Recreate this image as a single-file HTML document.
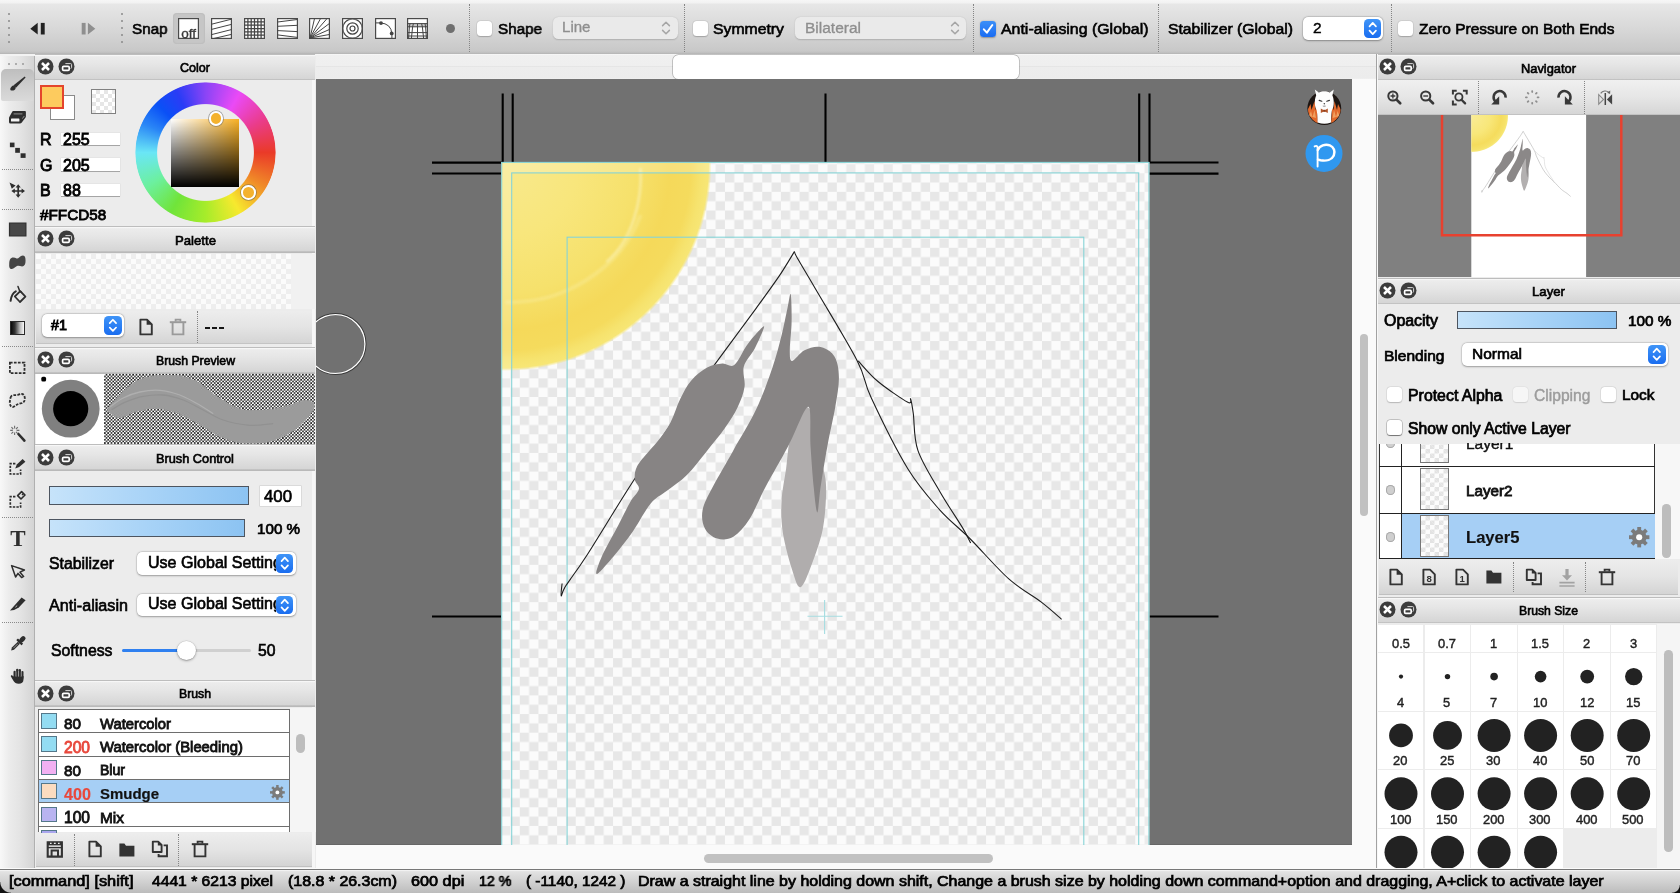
<!DOCTYPE html>
<html><head><meta charset="utf-8"><title>MediBang Paint</title>
<style>
html,body{margin:0;padding:0}
body{width:1680px;height:893px;overflow:hidden;background:#ececec;position:relative;font-family:"Liberation Sans", sans-serif;}
#root{position:absolute;left:0;top:0;width:1680px;height:893px;overflow:hidden}
.t,#root svg{will-change:transform}
#root div,#root span,#root svg{position:absolute;box-sizing:border-box}
.t{white-space:pre;display:block}

.hdr{background:linear-gradient(#ececec,#e2e2e2 45%,#d3d3d3);border-top:1px solid #f8f8f8;border-bottom:1px solid #b9b9b9}
.cb{background:#fff;border-radius:3.5px;box-shadow:0 0 0 0.5px rgba(0,0,0,.07),0 0.5px 1.2px rgba(0,0,0,.2)}
.sel{background:#fff;border-radius:5px;box-shadow:0 0 0 0.5px rgba(0,0,0,.12),0 0.5px 2px rgba(0,0,0,.3)}
.step{background:linear-gradient(#3f94f7,#1a6df0);border-radius:4.5px}
.bar{background:linear-gradient(90deg,#c6e3fa,#a8d3f7 50%,#8cc3f2);border:1px solid #4d5560}
.vsep{width:0;border-left:1.6px dotted #858585}
.hsep{height:0;border-top:1.6px dotted #8a8a8a}
</style></head>
<body><div id="root">
<div style="left:0px;top:0px;width:1680px;height:54px;background:linear-gradient(#f6f6f6 0,#f2f2f2 3px,#e7e7e7 4px,#e2e2e2 12px,#d7d7d7 30px,#c8c8c8 51px,#bebebe 53px,#b2b2b2 54px)"></div>
<div style="left:0px;top:54px;width:1680px;height:2px;background:#f3f3f3"></div>
<div style="left:8.3px;top:12.6px;width:2px;height:2px;background:#8a8a8a;border-radius:50%"></div>
<div style="left:121.3px;top:12.6px;width:2px;height:2px;background:#8a8a8a;border-radius:50%"></div>
<div style="left:8.3px;top:19.6px;width:2px;height:2px;background:#8a8a8a;border-radius:50%"></div>
<div style="left:121.3px;top:19.6px;width:2px;height:2px;background:#8a8a8a;border-radius:50%"></div>
<div style="left:8.3px;top:26.6px;width:2px;height:2px;background:#8a8a8a;border-radius:50%"></div>
<div style="left:121.3px;top:26.6px;width:2px;height:2px;background:#8a8a8a;border-radius:50%"></div>
<div style="left:8.3px;top:33.6px;width:2px;height:2px;background:#8a8a8a;border-radius:50%"></div>
<div style="left:121.3px;top:33.6px;width:2px;height:2px;background:#8a8a8a;border-radius:50%"></div>
<div style="left:8.3px;top:40.6px;width:2px;height:2px;background:#8a8a8a;border-radius:50%"></div>
<div style="left:121.3px;top:40.6px;width:2px;height:2px;background:#8a8a8a;border-radius:50%"></div>
<svg style="left:26px;top:17px;" width="26" height="24" viewBox="0 0 26 24"><path d="M11.7 5.8 L4.3 11.7 L11.7 17.6 Z" fill="#222"/><rect x="14.8" y="5.9" width="3.9" height="11.6" fill="#222"/></svg>
<svg style="left:76px;top:17px;" width="26" height="24" viewBox="0 0 26 24"><path d="M11.9 5.8 L19.3 11.7 L11.9 17.6 Z" fill="#8f8f8f"/><rect x="5.7" y="5.9" width="3.9" height="11.6" fill="#8f8f8f"/></svg>
<span class="t" style="left:132.00px;top:20.00px;font-size:15.3px;line-height:18px;height:18px;color:#000;-webkit-text-stroke:0.63px #000;transform:scaleX(0.9935);transform-origin:0 50%;">Snap</span>
<div style="left:172.5px;top:12.5px;width:32.5px;height:31.5px;background:#c6c6c6;border-radius:4px;box-shadow:inset 0 0 2px rgba(0,0,0,.12)"></div>
<svg style="left:178.2px;top:18px;" width="21" height="21" viewBox="0 0 21 21"><rect x="0.6" y="0.6" width="19.8" height="19.8" fill="#fff" stroke="#4a4a4a" stroke-width="1.2"/><text x="10.7" y="19.6" font-family="Liberation Sans" font-size="13.6" text-anchor="middle" fill="#3a3a3a" stroke="#3a3a3a" stroke-width=".35" textLength="14.8" lengthAdjust="spacingAndGlyphs">off</text></svg>
<svg style="left:211px;top:18px;" width="21" height="21" viewBox="0 0 21 21"><rect x="0.6" y="0.6" width="19.8" height="19.8" fill="#fff" stroke="#4a4a4a" stroke-width="1.2"/><path d="M0.6 6.2 L20.4 1.2 M0.6 11.4 L20.4 6.4 M0.6 16.6 L20.4 11.6 M0.6 21 L20.4 16.4" stroke="#444" stroke-width="1" fill="none"/></svg>
<svg style="left:244px;top:18px;" width="21" height="21" viewBox="0 0 21 21"><rect x="0.6" y="0.6" width="19.8" height="19.8" fill="#fff" stroke="#4a4a4a" stroke-width="1.2"/><path d="M3.9 0.6V20.4M7.2 0.6V20.4M10.5 0.6V20.4M13.8 0.6V20.4M17.1 0.6V20.4M0.6 3.9H20.4M0.6 7.2H20.4M0.6 10.5H20.4M0.6 13.8H20.4M0.6 17.1H20.4" stroke="#444" stroke-width="1.25" fill="none"/></svg>
<svg style="left:276.5px;top:18px;" width="21" height="21" viewBox="0 0 21 21"><rect x="0.6" y="0.6" width="19.8" height="19.8" fill="#fff" stroke="#4a4a4a" stroke-width="1.2"/><path d="M0.6 4 L20.4 1.5 M0.6 8.3 L20.4 7.3 M0.6 12.6 L20.4 13.6 M0.6 16.9 L20.4 19.4" stroke="#444" stroke-width="1" fill="none"/></svg>
<svg style="left:309px;top:18px;" width="21" height="21" viewBox="0 0 21 21"><rect x="0.6" y="0.6" width="19.8" height="19.8" fill="#fff" stroke="#4a4a4a" stroke-width="1.2"/><path d="M1 20 L5.5 0.6 M1 20 L11.5 0.6 M1 20 L18 0.6 M1 20 L20.4 5.5 M1 20 L20.4 11.5 M1 20 L20.4 16.5" stroke="#444" stroke-width="1" fill="none"/></svg>
<svg style="left:342px;top:18px;" width="21" height="21" viewBox="0 0 21 21"><rect x="0.6" y="0.6" width="19.8" height="19.8" fill="#fff" stroke="#4a4a4a" stroke-width="1.2"/><defs><clipPath id="sc6"><rect x="1.2" y="1.2" width="18.6" height="18.6"/></clipPath></defs><g clip-path="url(#sc6)" stroke="#444" stroke-width="1.2" fill="none"><circle cx="10.5" cy="10.5" r="9.7"/><circle cx="10.5" cy="10.5" r="5.7"/><circle cx="10.5" cy="10.5" r="2.5"/></g></svg>
<svg style="left:374.5px;top:18px;" width="21" height="21" viewBox="0 0 21 21"><rect x="0.6" y="0.6" width="19.8" height="19.8" fill="#fff" stroke="#4a4a4a" stroke-width="1.2"/><path d="M0.6 4.9 H5 Q16.3 5.4 16.9 16 V20.4" stroke="#444" stroke-width="1" fill="none" stroke-width="1.2"/><circle cx="6" cy="5.1" r="1.9" fill="#444"/><circle cx="16.7" cy="15.4" r="1.9" fill="#444"/></svg>
<svg style="left:407px;top:18px;" width="21" height="21" viewBox="0 0 21 21"><rect x="0.6" y="0.6" width="19.8" height="19.8" fill="#fff" stroke="#4a4a4a" stroke-width="1.2"/><path d="M0.6 5.6H20.4M0.6 8.8H20.4M0.6 14.6H20.4M0.6 18H20.4 M6.4 5.6 L5.6 9 L4.4 20.4 M10.5 5.6V20.4 M14.6 5.6 L15.4 9 L16.6 20.4 M3 5.6 L2.4 9 L1.6 20.4 M18 5.6 L18.6 9 L19.4 20.4" stroke="#444" stroke-width="1" fill="none"/><rect x="0.6" y="5.6" width="19.8" height="3.2" fill="#444" opacity=".3"/></svg>
<div style="left:445.7px;top:24.1px;width:9.2px;height:9.2px;background:#6f6f6f;border-radius:50%"></div>
<div class="vsep" style="left:469.0px;top:4px;height:48px"></div>
<div class="cb" style="left:477px;top:21px;width:15px;height:15px;"></div>
<span class="t" style="left:497.50px;top:20.00px;font-size:15.3px;line-height:18px;height:18px;color:#000;-webkit-text-stroke:0.63px #000;transform:scaleX(0.9945);transform-origin:0 50%;">Shape</span>
<div style="left:552.5px;top:16.5px;width:125px;height:22.5px;background:#eaeaea;border-radius:5.5px;box-shadow:0 0.5px 1.5px rgba(0,0,0,.16)"></div>
<span class="t" style="left:562.00px;top:18.30px;font-size:15.07px;line-height:18px;height:18px;color:#8e8e8e;-webkit-text-stroke:0.32px #8e8e8e;">Line</span>
<svg style="left:660px;top:18.8px;" width="12" height="18" viewBox="0 0 12 18"><path d="M2.6 6.6 L6 3.2 L9.4 6.6 M2.6 11.4 L6 14.8 L9.4 11.4" fill="none" stroke="#a6a6a6" stroke-width="1.5" stroke-linecap="round" stroke-linejoin="round"/></svg>
<div class="vsep" style="left:684.3px;top:4px;height:48px"></div>
<div class="cb" style="left:693px;top:21px;width:15px;height:15px;"></div>
<span class="t" style="left:713.00px;top:20.00px;font-size:15.3px;line-height:18px;height:18px;color:#000;-webkit-text-stroke:0.63px #000;transform:scaleX(1.0312);transform-origin:0 50%;">Symmetry</span>
<div style="left:794.5px;top:16.5px;width:171.5px;height:22.5px;background:#eaeaea;border-radius:5.5px;box-shadow:0 0.5px 1.5px rgba(0,0,0,.16)"></div>
<span class="t" style="left:804.50px;top:17.80px;font-size:15.5px;line-height:19px;height:19px;color:#8e8e8e;-webkit-text-stroke:0.32px #8e8e8e;">Bilateral</span>
<svg style="left:948.5px;top:18.8px;" width="12" height="18" viewBox="0 0 12 18"><path d="M2.6 6.6 L6 3.2 L9.4 6.6 M2.6 11.4 L6 14.8 L9.4 11.4" fill="none" stroke="#a6a6a6" stroke-width="1.5" stroke-linecap="round" stroke-linejoin="round"/></svg>
<div class="vsep" style="left:972.9px;top:4px;height:48px"></div>
<div style="left:980px;top:20.5px;width:16px;height:16px;border-radius:3.5px;background:linear-gradient(#3b8ff8,#1a6cf2);box-shadow:0 0.5px 1.5px rgba(0,0,0,.3)"></div>
<svg style="left:980px;top:20.5px;" width="16" height="16" viewBox="0 0 16 16"><path d="M3.84 8.32 L6.88 11.68 L12.32 4.0" fill="none" stroke="#fff" stroke-width="2" stroke-linecap="round" stroke-linejoin="round"/></svg>
<span class="t" style="left:1001.40px;top:20.00px;font-size:15.3px;line-height:18px;height:18px;color:#000;-webkit-text-stroke:0.63px #000;transform:scaleX(1.0386);transform-origin:0 50%;">Anti-aliasing (Global)</span>
<div class="vsep" style="left:1158.3px;top:4px;height:48px"></div>
<span class="t" style="left:1168.00px;top:20.00px;font-size:15.3px;line-height:18px;height:18px;color:#000;-webkit-text-stroke:0.63px #000;transform:scaleX(1.0280);transform-origin:0 50%;">Stabilizer (Global)</span>
<div class="sel" style="left:1303px;top:16.5px;width:80px;height:23px"></div>
<span class="t" style="left:1313.00px;top:18.00px;font-size:15.5px;line-height:19px;height:19px;color:#000;-webkit-text-stroke:0.42px #000;">2</span>
<div class="step" style="left:1363.5px;top:18.5px;width:17.5px;height:19px"></div>
<svg style="left:1363.5px;top:18.5px;" width="17.5" height="19" viewBox="0 0 17.5 19"><path d="M5.55 7.3 L8.75 3.9000000000000004 L11.95 7.3 M5.55 11.7 L8.75 15.1 L11.95 11.7" fill="none" stroke="#fff" stroke-width="1.7" stroke-linecap="round" stroke-linejoin="round"/></svg>
<div class="vsep" style="left:1390.6px;top:4px;height:48px"></div>
<div class="cb" style="left:1397.6px;top:21px;width:15px;height:15px;"></div>
<span class="t" style="left:1419.00px;top:20.00px;font-size:15.3px;line-height:18px;height:18px;color:#000;-webkit-text-stroke:0.63px #000;transform:scaleX(1.0127);transform-origin:0 50%;">Zero Pressure on Both Ends</span>
<div style="left:0px;top:56px;width:35px;height:815px;background:linear-gradient(90deg,#f8f8f8,#ececec 25%,#e3e3e3 60%,#d3d3d3)"></div>
<div style="left:34.2px;top:56px;width:1px;height:815px;background:#b0b0b0"></div>
<div style="left:35.2px;top:56px;width:1.2px;height:815px;background:#f6f6f6"></div>
<div style="left:8.3px;top:63.2px;width:2px;height:2px;background:#9a9a9a;border-radius:50%"></div>
<div style="left:15.100000000000001px;top:63.2px;width:2px;height:2px;background:#9a9a9a;border-radius:50%"></div>
<div style="left:21.9px;top:63.2px;width:2px;height:2px;background:#9a9a9a;border-radius:50%"></div>
<div style="left:1.4px;top:68.5px;width:32.6px;height:32.5px;background:linear-gradient(#bebebe,#cdcdcd 50%,#dadada);border-radius:5px 5px 2px 2px"></div>
<svg style="left:0px;top:56px;" width="35" height="650" viewBox="0 56 35 650"><path d="M24.7 76.5 L25.6 77.5 L16 87.7 L13.6 85.3 Z" fill="#2e2e2e"/><path d="M13.6 85.4 C14.9 85.6 15.9 86.8 15.7 87.9 C15.2 90.4 12.6 91.1 10.6 90.2 C9.9 89.1 10.4 88.4 10.9 87.6 C11.5 86.4 12.2 85.3 13.6 85.4Z" fill="#2e2e2e"/><path d="M13.2 111 H25 Q25.9 111 25.9 112 V116.6 Q25.9 117.2 25.4 117.8 L21.6 122.8 Q21 123.6 20 123.6 H10.6 Q9 123.6 9 122 V118.4 Q9 117.4 9.6 116.6 L12.2 111.8 Q12.6 111 13.2 111 Z" fill="#2e2e2e"/><rect x="11" y="118.5" width="8.4" height="3" rx=".6" fill="#f4f4f4"/><path d="M13.6 113.9 H22.4" stroke="#8a8a8a" stroke-width="1.1"/><path d="M22.4 118.6 L24.3 116" stroke="#9a9a9a" stroke-width=".9"/><rect x="9.9" y="142.6" width="4.6" height="4.6" fill="#2e2e2e"/><rect x="15.2" y="147.9" width="4.7" height="4.9" fill="#2e2e2e"/><rect x="20.6" y="153.3" width="5" height="4.6" fill="#2e2e2e"/><path d="M9.5 182.6 L15.6 185.4 L11.8 188.8 Z" fill="#2e2e2e"/><path d="M18.2 186.6 V195.4 M13.8 191 H22.6" stroke="#2e2e2e" stroke-width="1.7" fill="none"/><path d="M18.2 184.2 L20.8 187.6 H15.6Z M18.2 197.8 L20.8 194.4 H15.6Z M11.4 191 L14.8 188.4 V193.6Z M25 191 L21.6 188.4 V193.6Z" fill="#2e2e2e"/><rect x="9.5" y="223.1" width="16.4" height="12.8" fill="#484848" stroke="#303030" stroke-width="1.2"/><path d="M10 259.5 C11.6 256.6 14.6 257.4 16.6 258.4 C18.4 259 19.4 257 21 256 C23.4 254.6 25.2 256 25.4 258.4 C25.8 261.4 25.6 264.6 23.6 266 C21.6 267.2 19.6 265.4 17.6 265.8 C15.6 266.2 14 268.8 11.8 269 C9.6 269 9 266.6 9.2 264.4 C9.3 262.6 9.2 261 10 259.5Z" fill="#454545"/><path d="M20.3 291.2 L25.4 296.6 L20 302 L14.8 296.5 Z" fill="none" stroke="#2e2e2e" stroke-width="1.8" stroke-linejoin="round"/><path d="M18 286.4 L19.6 290.8 L21.4 292.4" fill="none" stroke="#2e2e2e" stroke-width="1.5" stroke-linecap="round"/><path d="M15.8 291.4 C12.6 293 11.2 296.6 10.6 300.8" fill="none" stroke="#2e2e2e" stroke-width="2" stroke-linecap="round"/><rect x="9.9" y="362.7" width="14.6" height="10.4" fill="none" stroke="#2e2e2e" stroke-width="1.8" stroke-dasharray="2.7 1.3"/><path d="M10.6 397.6 C11.6 393.8 15 395.6 17.6 395 C20.6 394 23.4 393 24.4 396 C25.4 399.4 24.6 402.6 21.6 403.2 C18.6 403.6 16.6 404.6 14 406.6 C11.6 408.2 9.6 405.4 9.8 402.4 C9.9 400.6 10.2 399 10.6 397.6Z" fill="none" stroke="#2e2e2e" stroke-width="1.8" stroke-dasharray="2.7 1.3"/><path d="M18.4 434 L24.4 440.6" stroke="#2e2e2e" stroke-width="2.6" stroke-linecap="round"/><path d="M14.6 425.8V428.4 M14.6 432.4V435 M10.2 430.4H12.8 M16.6 430.4H19.4 M11.4 427.2 L13.2 429 M16 431.8 L17.2 433 M17.8 427.2 L16 429 M13.2 431.8 L11.4 433.6" stroke="#6e6e6e" stroke-width="1.1"/><path d="M15.4 463.6 H10.3 V474 H20.6 V469.6" fill="none" stroke="#2e2e2e" stroke-width="1.7" stroke-dasharray="2.4 1.2"/><path d="M22.6 459 L25.4 461.8 L19.2 467 L15.2 468.4 L16.8 464.4 Z" fill="#2e2e2e"/><path d="M15.4 496.6 H10.3 V507 H20.6 V502.6" fill="none" stroke="#2e2e2e" stroke-width="1.7" stroke-dasharray="2.4 1.2"/><path d="M21.6 491.6 L25 495 L21 499 L17.6 495.6 Z" fill="none" stroke="#2e2e2e" stroke-width="1.6" stroke-linejoin="round"/><path d="M22.9 493.2 L23.9 494.2 L22.6 495.6 L21.5 494.6Z" fill="#2e2e2e"/><path d="M11.6 565.6 L24.4 570 L20 572.2 L23.6 576.4 L21.6 577.6 L18 573.4 L15.6 577 Z" fill="none" stroke="#2e2e2e" stroke-width="1.5" stroke-linejoin="round"/><path d="M10 610.5 L21.6 597.5 L25.6 600.3 L18.8 607.6 Q14.8 610.6 10 610.5 Z" fill="#2e2e2e"/><path d="M15.4 607.2 L17.2 605.6" stroke="#d0d0d0" stroke-width=".9"/><g transform="translate(19.6 642) rotate(45)"><rect x="-2.3" y="-7.4" width="4.6" height="6.8" rx="2.2" fill="#2e2e2e"/><rect x="-3.7" y="-1.3" width="7.4" height="2.3" rx=".5" fill="#2e2e2e"/><path d="M-1.5 1 V9.4 L0 12 L1.5 9.4 V1 Z" fill="#2e2e2e"/><path d="M0 2.6 V8.8" stroke="#9a9a9a" stroke-width=".9"/></g><g fill="#2e2e2e"><rect x="13.5" y="670.8" width="2.3" height="8" rx="1.1"/><rect x="16.1" y="668.7" width="2.3" height="10" rx="1.1"/><rect x="18.7" y="669.1" width="2.3" height="10" rx="1.1"/><rect x="21.3" y="671" width="2.2" height="8" rx="1.1"/><path d="M13.5 676 H23.5 V679.6 C23.5 682.6 21.4 683.8 18.8 683.8 C16 683.8 14.6 682.8 13.4 680.8 L10.9 676.6 C10.4 675.6 11.6 674.8 12.4 675.6 L13.5 677 Z"/></g><path d="M16 671.6 V677 M18.55 671 V677 M21.15 671.6 V677" stroke="#c8c8c8" stroke-width=".45"/></svg>
<div style="left:10px;top:321.2px;width:14.8px;height:13.4px;background:linear-gradient(90deg,#0a0a0a,#333 30%,#bbb 70%,#fafafa);border:1.4px solid #2a2a2a"></div>
<span class="t" style="left:8.2px;top:525.8px;width:20px;text-align:center;font-family:'Liberation Serif',serif;font-weight:bold;font-size:23px;line-height:26px;color:#2e2e2e">T</span>
<div class="hsep" style="left:2px;top:168.60000000000002px;width:31px"></div>
<div class="hsep" style="left:2px;top:208.5px;width:31px"></div>
<div class="hsep" style="left:2px;top:346.1px;width:31px"></div>
<div class="hsep" style="left:2px;top:517.3px;width:31px"></div>
<div class="hsep" style="left:2px;top:622.3px;width:31px"></div>
<div style="left:35px;top:56px;width:280px;height:815px;background:#ececec"></div>
<div style="left:312.4px;top:56px;width:2.8px;height:815px;background:#f6f6f6"></div>
<div style="left:35px;top:53.5px;width:280px;height:1px;background:#bdbdbd"></div>
<div style="left:35px;top:54.5px;width:280px;height:25.5px;background:linear-gradient(#fafafa 0,#f4f4f4 1px,#ececec 1.6px,#e6e6e6 9px,#d5d5d5 24.3px,#b9b9b9 24.6px,#b9b9b9 25.5px)"></div>
<svg style="left:36.9px;top:57.8px;" width="17" height="17" viewBox="0 0 17 17"><circle cx="8.5" cy="8.5" r="8" fill="#3c3c3c"/><path d="M5 5 L12 12 M12 5 L5 12" stroke="#fff" stroke-width="2.5" stroke-linecap="butt"/></svg>
<svg style="left:57.9px;top:57.8px;" width="17" height="17" viewBox="0 0 17 17"><circle cx="8.5" cy="8.5" r="8" fill="#3c3c3c"/><path d="M7.4 5.6 H12.6 Q13.6 5.6 13.6 6.6 V9.4 Q13.6 10.4 12.6 10.4" fill="none" stroke="#d9d9d9" stroke-width="1"/><rect x="4.6" y="8.3" width="6.6" height="4" rx="1.1" fill="#3c3c3c" stroke="#fff" stroke-width="1.7"/></svg>
<span class="t" style="left:180.00px;top:60.50px;font-size:12.55px;line-height:15px;height:15px;color:#000;-webkit-text-stroke:0.63px #000;">Color</span>
<div style="left:49.9px;top:95.1px;width:24.9px;height:24.6px;background:#fff;border:1px solid #8a8a8a"></div>
<div style="left:39.5px;top:85px;width:24.5px;height:24px;background:#fdcb5e;border:2px solid #e4452c"></div>
<div style="left:90.8px;top:88.8px;width:25.5px;height:25.6px;border:1px solid #808080;background-color:#fff;background-image:linear-gradient(45deg,#e6e6e6 25%,transparent 25%,transparent 75%,#e6e6e6 75%),linear-gradient(45deg,#e6e6e6 25%,transparent 25%,transparent 75%,#e6e6e6 75%);background-size:8px 8px;background-position:0 0,4px 4px"></div>
<span class="t" style="left:40.20px;top:129.80px;font-size:16px;line-height:19px;height:19px;color:#000;-webkit-text-stroke:0.85px #000;">R</span>
<div style="left:60.5px;top:132.70000000000002px;width:59.3px;height:12.3px;background:#fff;box-shadow:0 0.6px 0.5px rgba(0,0,0,.28),0 0 0 0.5px rgba(0,0,0,.06)"></div>
<span class="t" style="left:62.60px;top:130.30px;font-size:16px;line-height:19px;height:19px;color:#000;-webkit-text-stroke:0.85px #000;">255</span>
<span class="t" style="left:40.20px;top:155.50px;font-size:16px;line-height:19px;height:19px;color:#000;-webkit-text-stroke:0.85px #000;">G</span>
<div style="left:60.5px;top:158.4px;width:59.3px;height:12.3px;background:#fff;box-shadow:0 0.6px 0.5px rgba(0,0,0,.28),0 0 0 0.5px rgba(0,0,0,.06)"></div>
<span class="t" style="left:62.60px;top:156.00px;font-size:16px;line-height:19px;height:19px;color:#000;-webkit-text-stroke:0.85px #000;">205</span>
<span class="t" style="left:40.20px;top:180.80px;font-size:16px;line-height:19px;height:19px;color:#000;-webkit-text-stroke:0.85px #000;">B</span>
<div style="left:60.5px;top:183.70000000000002px;width:59.3px;height:12.3px;background:#fff;box-shadow:0 0.6px 0.5px rgba(0,0,0,.28),0 0 0 0.5px rgba(0,0,0,.06)"></div>
<span class="t" style="left:62.60px;top:181.30px;font-size:16px;line-height:19px;height:19px;color:#000;-webkit-text-stroke:0.85px #000;">88</span>
<span class="t" style="left:39.90px;top:205.70px;font-size:15.27px;line-height:18px;height:18px;color:#000;-webkit-text-stroke:0.85px #000;">#FFCD58</span>
<div style="left:135.39999999999998px;top:82.39999999999999px;width:140.6px;height:140.6px;border-radius:50%;background:conic-gradient(from 90deg,#ea3a28,#f08a28 30deg,#f7e92e 60deg,#a6ec2a 90deg,#70e43a 120deg,#6cf09e 150deg,#6ae6f6 180deg,#2a86f6 205deg,#0a50f6 225deg,#2a3cf6 245deg,#8a44f6 270deg,#ea4af6 300deg,#ea3c8c 330deg,#ea3a28);-webkit-mask:radial-gradient(circle closest-side,transparent 47.9px,#000 48.9px,#000 69.6px,transparent 70.6px);mask:radial-gradient(circle closest-side,transparent 47.9px,#000 48.9px,#000 69.6px,transparent 70.6px)"></div>
<div style="left:171.3px;top:118.8px;width:68.2px;height:68px;background:linear-gradient(to top,#000,rgba(0,0,0,0)),linear-gradient(to right,#fff,#f9b125)"></div>
<div style="left:208.6px;top:111.3px;width:14.6px;height:14.6px;border-radius:50%;background:#f4b22e;border:2px solid #fff;box-shadow:0 0 0 0.8px rgba(90,90,90,.55)"></div>
<div style="left:241.1px;top:185.1px;width:14.6px;height:14.6px;border-radius:50%;background:#f4b22e;border:2px solid #fff;box-shadow:0 0 0 0.8px rgba(90,90,90,.55)"></div>
<div style="left:35px;top:226.0px;width:280px;height:1px;background:#bdbdbd"></div>
<div style="left:35px;top:227.0px;width:280px;height:25.5px;background:linear-gradient(#fafafa 0,#f4f4f4 1px,#ececec 1.6px,#e6e6e6 9px,#d5d5d5 24.3px,#b9b9b9 24.6px,#b9b9b9 25.5px)"></div>
<svg style="left:36.9px;top:230.3px;" width="17" height="17" viewBox="0 0 17 17"><circle cx="8.5" cy="8.5" r="8" fill="#3c3c3c"/><path d="M5 5 L12 12 M12 5 L5 12" stroke="#fff" stroke-width="2.5" stroke-linecap="butt"/></svg>
<svg style="left:57.9px;top:230.3px;" width="17" height="17" viewBox="0 0 17 17"><circle cx="8.5" cy="8.5" r="8" fill="#3c3c3c"/><path d="M7.4 5.6 H12.6 Q13.6 5.6 13.6 6.6 V9.4 Q13.6 10.4 12.6 10.4" fill="none" stroke="#d9d9d9" stroke-width="1"/><rect x="4.6" y="8.3" width="6.6" height="4" rx="1.1" fill="#3c3c3c" stroke="#fff" stroke-width="1.7"/></svg>
<span class="t" style="left:174.50px;top:232.50px;font-size:13.17px;line-height:16px;height:16px;color:#000;-webkit-text-stroke:0.63px #000;">Palette</span>
<div style="left:35.5px;top:253.5px;width:255px;height:55.5px;background-color:#fbfbfb;background-image:linear-gradient(45deg,#eeeeee 25%,transparent 25%,transparent 75%,#eeeeee 75%),linear-gradient(45deg,#eeeeee 25%,transparent 25%,transparent 75%,#eeeeee 75%);background-size:10px 10px;background-position:0 0,5px 5px"></div>
<div style="left:290.5px;top:253.5px;width:25px;height:55.5px;background:#f1f1f1"></div>
<div style="left:36px;top:310.5px;width:276.3px;height:33.5px;background:linear-gradient(#ededed,#e4e4e4 50%,#d5d5d5);border-bottom:1px solid #c4c4c4"></div>
<div class="sel" style="left:42.2px;top:314.3px;width:82.2px;height:22.8px"></div>
<span class="t" style="left:51.00px;top:316.70px;font-size:14.38px;line-height:17px;height:17px;color:#000;-webkit-text-stroke:0.85px #000;">#1</span>
<div class="step" style="left:104.3px;top:316.4px;width:17.8px;height:18.7px"></div>
<svg style="left:104.3px;top:316.4px;" width="17.8" height="18.7" viewBox="0 0 17.8 18.7"><path d="M5.7 7.1499999999999995 L8.9 3.75 L12.100000000000001 7.1499999999999995 M5.7 11.55 L8.9 14.95 L12.100000000000001 11.55" fill="none" stroke="#fff" stroke-width="1.7" stroke-linecap="round" stroke-linejoin="round"/></svg>
<svg style="left:136.6px;top:317.2px;" width="18" height="20" viewBox="0 0 18 20"><path d="M3.4 2.6 H10 L14.8 7.4 V17.4 H3.4 Z" fill="none" stroke="#333" stroke-width="1.9" stroke-linejoin="round"/><path d="M9.6 2.4 L15 7.8 H9.6 Z" fill="#333"/></svg>
<svg style="left:168.4px;top:316.3px;" width="20" height="22" viewBox="0 0 20 22"><path d="M1.8 6.2 H18.2" stroke="#9a9a9a" stroke-width="2" /><path d="M7.6 5.6 V3.6 H12.4 V5.6" fill="none" stroke="#9a9a9a" stroke-width="1.8"/><path d="M4.6 7 V18.4 H15.4 V7" fill="none" stroke="#9a9a9a" stroke-width="1.9"/></svg>
<div class="vsep" style="left:196.9px;top:311px;height:32px"></div>
<div style="left:204.9px;top:326.9px;width:5.6px;height:2.1px;background:#151515"></div>
<div style="left:211.9px;top:326.9px;width:5.6px;height:2.1px;background:#151515"></div>
<div style="left:218.9px;top:326.9px;width:5.6px;height:2.1px;background:#151515"></div>
<div style="left:35px;top:347.0px;width:280px;height:1px;background:#bdbdbd"></div>
<div style="left:35px;top:348.0px;width:280px;height:25.5px;background:linear-gradient(#fafafa 0,#f4f4f4 1px,#ececec 1.6px,#e6e6e6 9px,#d5d5d5 24.3px,#b9b9b9 24.6px,#b9b9b9 25.5px)"></div>
<svg style="left:36.9px;top:351.3px;" width="17" height="17" viewBox="0 0 17 17"><circle cx="8.5" cy="8.5" r="8" fill="#3c3c3c"/><path d="M5 5 L12 12 M12 5 L5 12" stroke="#fff" stroke-width="2.5" stroke-linecap="butt"/></svg>
<svg style="left:57.9px;top:351.3px;" width="17" height="17" viewBox="0 0 17 17"><circle cx="8.5" cy="8.5" r="8" fill="#3c3c3c"/><path d="M7.4 5.6 H12.6 Q13.6 5.6 13.6 6.6 V9.4 Q13.6 10.4 12.6 10.4" fill="none" stroke="#d9d9d9" stroke-width="1"/><rect x="4.6" y="8.3" width="6.6" height="4" rx="1.1" fill="#3c3c3c" stroke="#fff" stroke-width="1.7"/></svg>
<span class="t" style="left:155.51px;top:354.00px;font-size:12.25px;line-height:15px;height:15px;color:#000;-webkit-text-stroke:0.63px #000;">Brush Preview</span>
<div style="left:35.5px;top:374px;width:68.5px;height:69.5px;background:#fff"></div>
<div style="left:104px;top:374px;width:211px;height:69.5px;background-color:#fff;background-image:linear-gradient(45deg,#1c1c1c 25%,transparent 25%,transparent 75%,#1c1c1c 75%),linear-gradient(45deg,#1c1c1c 25%,transparent 25%,transparent 75%,#1c1c1c 75%);background-size:3.34px 3.34px;background-position:0 0,1.67px 1.67px"></div>
<svg style="left:35.5px;top:374px;" width="280.5" height="69.5" viewBox="35.5 374 280.5 69.5"><circle cx="70.2" cy="408.7" r="28.9" fill="#808080"/><circle cx="70.2" cy="408.7" r="17.6" fill="#000"/><rect x="40.8" y="376.8" width="4.8" height="4.8" rx="1.6" fill="#000"/><defs><filter id="bl"><feGaussianBlur stdDeviation="0.7"/></filter><clipPath id="pvc"><rect x="104" y="374" width="212" height="69.5"/></clipPath></defs><g clip-path="url(#pvc)"><path d="M107.3 408.7 C108.3 406.1 112.6 402.0 116.0 398.3 C119.4 394.7 122.9 390.1 127.7 386.7 C132.4 383.2 137.4 379.4 144.3 377.5 C151.3 375.6 161.0 374.5 169.3 375.0 C177.7 375.5 186.0 376.4 194.3 380.3 C202.7 384.2 211.0 393.4 219.3 398.3 C227.7 403.2 234.6 408.1 244.3 409.7 C254.1 411.3 267.9 409.5 277.7 408.0 C287.4 406.5 296.8 401.7 302.7 400.8 C308.6 400.0 311.5 401.2 313.0 403.0 C314.5 404.8 314.9 407.2 311.8 411.7 C308.7 416.2 301.4 425.0 294.3 430.0 C287.2 435.0 277.7 439.4 269.3 441.7 C261.0 443.9 252.7 444.5 244.3 443.7 C236.0 442.8 226.3 439.5 219.3 436.7 C212.4 433.8 209.6 430.5 202.7 426.7 C195.7 422.8 185.4 416.7 177.7 413.7 C169.9 410.7 162.9 409.0 156.0 408.7 C149.1 408.3 142.1 410.1 136.0 411.7 C129.9 413.2 123.6 417.7 119.3 418.0 C115.0 418.3 112.2 415.2 110.2 413.7 C108.2 412.1 106.4 411.2 107.3 408.7 Z" fill="#9b9b9b" filter="url(#bl)"/><path d="M109.3 407.0 C111.6 405.5 117.7 400.5 122.7 398.0 C127.7 395.5 133.2 393.3 139.3 392.0 C145.4 390.7 152.7 389.8 159.3 390.3 C166.0 390.8 173.2 392.8 179.3 395.0 C185.4 397.2 190.4 400.2 196.0 403.3 C201.6 406.4 209.9 411.9 212.7 413.7" fill="none" stroke="#b4b4b4" stroke-width="1.3" opacity=".8" filter="url(#bl)"/><path d="M111.0 409.7 C113.5 408.3 120.7 403.9 126.0 401.7 C131.3 399.4 136.6 397.4 142.7 396.3 C148.8 395.2 156.0 394.4 162.7 395.0 C169.3 395.6 176.0 397.5 182.7 400.0 C189.3 402.5 196.0 406.7 202.7 410.0 C209.3 413.3 214.9 417.4 222.7 420.0 C230.4 422.6 241.0 424.7 249.3 425.3 C257.7 425.9 268.8 423.9 272.7 423.7" fill="none" stroke="#8d8d8d" stroke-width="1.3" opacity=".7" filter="url(#bl)"/></g></svg>
<div style="left:35.5px;top:443.5px;width:279.5px;height:1px;background:#c4c4c4"></div>
<div style="left:35px;top:444.2px;width:280px;height:1px;background:#bdbdbd"></div>
<div style="left:35px;top:445.2px;width:280px;height:25.5px;background:linear-gradient(#fafafa 0,#f4f4f4 1px,#ececec 1.6px,#e6e6e6 9px,#d5d5d5 24.3px,#b9b9b9 24.6px,#b9b9b9 25.5px)"></div>
<svg style="left:36.9px;top:448.5px;" width="17" height="17" viewBox="0 0 17 17"><circle cx="8.5" cy="8.5" r="8" fill="#3c3c3c"/><path d="M5 5 L12 12 M12 5 L5 12" stroke="#fff" stroke-width="2.5" stroke-linecap="butt"/></svg>
<svg style="left:57.9px;top:448.5px;" width="17" height="17" viewBox="0 0 17 17"><circle cx="8.5" cy="8.5" r="8" fill="#3c3c3c"/><path d="M7.4 5.6 H12.6 Q13.6 5.6 13.6 6.6 V9.4 Q13.6 10.4 12.6 10.4" fill="none" stroke="#d9d9d9" stroke-width="1"/><rect x="4.6" y="8.3" width="6.6" height="4" rx="1.1" fill="#3c3c3c" stroke="#fff" stroke-width="1.7"/></svg>
<span class="t" style="left:155.99px;top:451.20px;font-size:12.76px;line-height:15px;height:15px;color:#000;-webkit-text-stroke:0.63px #000;">Brush Control</span>
<div class="bar" style="left:48.5px;top:486px;width:200px;height:19px"></div>
<div style="left:260px;top:486px;width:41px;height:20px;background:#fff;box-shadow:0 0 0 0.5px rgba(0,0,0,.15)"></div>
<span class="t" style="left:263.50px;top:486.50px;font-size:16.78px;line-height:20px;height:20px;color:#000;-webkit-text-stroke:0.63px #000;">400</span>
<div class="bar" style="left:48.5px;top:518.8px;width:196.5px;height:18.5px"></div>
<span class="t" style="left:257.00px;top:519.50px;font-size:15.2px;line-height:18px;height:18px;color:#000;-webkit-text-stroke:0.73px #000;transform:scaleX(0.9977);transform-origin:0 50%;">100 %</span>
<span class="t" style="left:48.80px;top:553.50px;font-size:15.8px;line-height:19px;height:19px;color:#000;-webkit-text-stroke:0.63px #000;">Stabilizer</span>
<div class="sel" style="left:137px;top:552px;width:158.5px;height:22.5px"></div>
<span class="t" style="left:147.50px;top:552.80px;font-size:16.06px;line-height:19px;height:19px;color:#000;-webkit-text-stroke:0.63px #000;">Use Global Settin</span>
<span class="t" style="left:272.90px;top:552.80px;font-size:15.9px;line-height:19px;height:19px;color:#000;-webkit-text-stroke:0.63px #000;width:3.2px;overflow:hidden;">g</span>
<div class="step" style="left:275.5px;top:554px;width:17.5px;height:18.5px"></div>
<svg style="left:275.5px;top:554px;" width="17.5" height="18.5" viewBox="0 0 17.5 18.5"><path d="M5.55 7.05 L8.75 3.6500000000000004 L11.95 7.05 M5.55 11.45 L8.75 14.85 L11.95 11.45" fill="none" stroke="#fff" stroke-width="1.7" stroke-linecap="round" stroke-linejoin="round"/></svg>
<span class="t" style="left:48.80px;top:595.50px;font-size:16.15px;line-height:19px;height:19px;color:#000;-webkit-text-stroke:0.63px #000;">Anti-aliasin</span>
<div class="sel" style="left:137px;top:593.5px;width:158.5px;height:22.5px"></div>
<span class="t" style="left:147.50px;top:594.30px;font-size:16.06px;line-height:19px;height:19px;color:#000;-webkit-text-stroke:0.63px #000;">Use Global Settin</span>
<span class="t" style="left:272.90px;top:594.30px;font-size:15.9px;line-height:19px;height:19px;color:#000;-webkit-text-stroke:0.63px #000;width:3.2px;overflow:hidden;">g</span>
<div class="step" style="left:275.5px;top:595.5px;width:17.5px;height:18.5px"></div>
<svg style="left:275.5px;top:595.5px;" width="17.5" height="18.5" viewBox="0 0 17.5 18.5"><path d="M5.55 7.05 L8.75 3.6500000000000004 L11.95 7.05 M5.55 11.45 L8.75 14.85 L11.95 11.45" fill="none" stroke="#fff" stroke-width="1.7" stroke-linecap="round" stroke-linejoin="round"/></svg>
<span class="t" style="left:51.30px;top:640.80px;font-size:15.8px;line-height:19px;height:19px;color:#000;-webkit-text-stroke:0.63px #000;">Softness</span>
<div style="left:122px;top:648.8px;width:129px;height:3.2px;background:#d0d0d0;border-radius:2px"></div>
<div style="left:122px;top:648.8px;width:66px;height:3.2px;background:#2f80f0;border-radius:2px"></div>
<div style="left:177.2px;top:640.8px;width:19px;height:19px;background:#fff;border-radius:50%;box-shadow:0 0 0 0.5px rgba(0,0,0,.12),0 1px 2.5px rgba(0,0,0,.35)"></div>
<span class="t" style="left:258.30px;top:640.80px;font-size:15.73px;line-height:19px;height:19px;color:#000;-webkit-text-stroke:0.63px #000;">50</span>
<div style="left:35px;top:680.2px;width:280px;height:1px;background:#bdbdbd"></div>
<div style="left:35px;top:681.2px;width:280px;height:25.5px;background:linear-gradient(#fafafa 0,#f4f4f4 1px,#ececec 1.6px,#e6e6e6 9px,#d5d5d5 24.3px,#b9b9b9 24.6px,#b9b9b9 25.5px)"></div>
<svg style="left:36.9px;top:684.5px;" width="17" height="17" viewBox="0 0 17 17"><circle cx="8.5" cy="8.5" r="8" fill="#3c3c3c"/><path d="M5 5 L12 12 M12 5 L5 12" stroke="#fff" stroke-width="2.5" stroke-linecap="butt"/></svg>
<svg style="left:57.9px;top:684.5px;" width="17" height="17" viewBox="0 0 17 17"><circle cx="8.5" cy="8.5" r="8" fill="#3c3c3c"/><path d="M7.4 5.6 H12.6 Q13.6 5.6 13.6 6.6 V9.4 Q13.6 10.4 12.6 10.4" fill="none" stroke="#d9d9d9" stroke-width="1"/><rect x="4.6" y="8.3" width="6.6" height="4" rx="1.1" fill="#3c3c3c" stroke="#fff" stroke-width="1.7"/></svg>
<span class="t" style="left:179.00px;top:687.20px;font-size:12.25px;line-height:15px;height:15px;color:#000;-webkit-text-stroke:0.63px #000;">Brush</span>
<div style="left:37.5px;top:708.5px;width:252px;height:123px;background:#fff;border:1px solid #6e6e6e;border-bottom:none"></div>
<div style="left:289.5px;top:708px;width:26px;height:123.5px;background:#f5f5f5"></div>
<div style="left:38px;top:732.1px;width:251px;height:1px;background:#6e6e6e"></div>
<div style="left:41px;top:713.0px;width:15.6px;height:15.6px;background:#93dcf2;border:1px solid #55788a;border-bottom-width:1px"></div>
<span class="t" style="left:63.50px;top:714.80px;font-size:15.28px;line-height:18px;height:18px;color:#111;-webkit-text-stroke:0.85px #111;">80</span>
<span class="t" style="left:100.00px;top:714.60px;font-size:14.8px;line-height:18px;height:18px;color:#111;-webkit-text-stroke:0.85px #111;">Watercolor</span>
<div style="left:38px;top:755.5px;width:251px;height:1px;background:#6e6e6e"></div>
<div style="left:41px;top:736.4px;width:15.6px;height:15.6px;background:#93dcf2;border:1px solid #55788a;border-bottom-width:1px"></div>
<span class="t" style="left:63.50px;top:737.70px;font-size:15.58px;line-height:19px;height:19px;color:#e8483c;-webkit-text-stroke:0.85px #e8483c;">200</span>
<span class="t" style="left:100.00px;top:738.00px;font-size:14.84px;line-height:18px;height:18px;color:#111;-webkit-text-stroke:0.85px #111;">Watercolor (Bleeding)</span>
<div style="left:38px;top:778.9px;width:251px;height:1px;background:#6e6e6e"></div>
<div style="left:41px;top:759.8px;width:15.6px;height:15.6px;background:#f2b0f2;border:1px solid #55788a;border-bottom-width:1px"></div>
<span class="t" style="left:63.50px;top:761.60px;font-size:15.28px;line-height:18px;height:18px;color:#111;-webkit-text-stroke:0.85px #111;">80</span>
<span class="t" style="left:100.00px;top:761.90px;font-size:14.06px;line-height:17px;height:17px;color:#111;-webkit-text-stroke:0.85px #111;">Blur</span>
<div style="left:38.5px;top:779.9000000000001px;width:250px;height:22.9px;background:#a6cff5"></div>
<div style="left:38px;top:802.3000000000001px;width:251px;height:1px;background:#6e6e6e"></div>
<div style="left:41px;top:783.2px;width:15.6px;height:15.6px;background:#fbdcc0;border:1px solid #55788a;border-bottom-width:1px"></div>
<span class="t" style="left:63.50px;top:784.50px;font-size:16.18px;line-height:19px;height:19px;color:#e8483c;font-weight:bold;-webkit-text-stroke:0.15px #e8483c;">400</span>
<span class="t" style="left:100.00px;top:784.80px;font-size:14.96px;line-height:18px;height:18px;color:#111;font-weight:bold;-webkit-text-stroke:0.2px #111;">Smudge</span>
<div style="left:38px;top:825.7px;width:251px;height:1px;background:#6e6e6e"></div>
<div style="left:41px;top:806.6px;width:15.6px;height:15.6px;background:#b9b4f1;border:1px solid #55788a;border-bottom-width:1px"></div>
<span class="t" style="left:63.50px;top:807.90px;font-size:15.58px;line-height:19px;height:19px;color:#111;-webkit-text-stroke:0.85px #111;">100</span>
<span class="t" style="left:100.00px;top:807.70px;font-size:15.43px;line-height:19px;height:19px;color:#111;-webkit-text-stroke:0.85px #111;">Mix</span>
<div style="left:41px;top:830.0px;width:15.6px;height:4.5px;background:#aaa6ee;border:1px solid #55788a;border-bottom-width:0px"></div>
<svg style="left:268.90000000000003px;top:784.0px;" width="16.8" height="16.8" viewBox="0 0 16.8 16.8"><g transform="translate(8.4 8.4)"><rect x="-1.26" y="-7.40" width="2.52" height="3.11" transform="rotate(0)" fill="#7b7b7b"/><rect x="-1.26" y="-7.40" width="2.52" height="3.11" transform="rotate(45)" fill="#7b7b7b"/><rect x="-1.26" y="-7.40" width="2.52" height="3.11" transform="rotate(90)" fill="#7b7b7b"/><rect x="-1.26" y="-7.40" width="2.52" height="3.11" transform="rotate(135)" fill="#7b7b7b"/><rect x="-1.26" y="-7.40" width="2.52" height="3.11" transform="rotate(180)" fill="#7b7b7b"/><rect x="-1.26" y="-7.40" width="2.52" height="3.11" transform="rotate(225)" fill="#7b7b7b"/><rect x="-1.26" y="-7.40" width="2.52" height="3.11" transform="rotate(270)" fill="#7b7b7b"/><rect x="-1.26" y="-7.40" width="2.52" height="3.11" transform="rotate(315)" fill="#7b7b7b"/><circle r="5.33" fill="#7b7b7b"/><circle r="1.92" fill="#fff"/></g></svg>
<div style="left:296px;top:733.5px;width:9.4px;height:19px;background:#bdbdbd;border-radius:5px"></div>
<div style="left:36px;top:832.5px;width:276.3px;height:34.5px;background:linear-gradient(#ededed,#e4e4e4 50%,#d4d4d4);border-bottom:1px solid #c0c0c0"></div>
<svg style="left:46px;top:839.6px;" width="18" height="19" viewBox="0 0 18 19"><path d="M1.7 2.2 H15.9 V16.6 H1.7 Z" fill="none" stroke="#333" stroke-width="2.1"/><path d="M1.7 3.6 H15.9" stroke="#333" stroke-width="3.6"/><path d="M4 3.4 H5.6 M7.9 3.4 H9.7 M12 3.4 H13.6" stroke="#f0f0f0" stroke-width="1.3"/><path d="M1.7 7.6 H15.9" stroke="#333" stroke-width="1.4"/><path d="M5.6 16.6 V10.6 H12 V16.6" fill="none" stroke="#333" stroke-width="2"/></svg>
<div class="vsep" style="left:73.5px;top:834px;height:32px"></div>
<svg style="left:85.5px;top:839.4px;" width="18" height="20" viewBox="0 0 18 20"><path d="M3.4 2.6 H10 L14.8 7.4 V17.4 H3.4 Z" fill="none" stroke="#333" stroke-width="1.9" stroke-linejoin="round"/><path d="M9.6 2.4 L15 7.8 H9.6 Z" fill="#333"/></svg>
<svg style="left:116.5px;top:840.6px;" width="20" height="18" viewBox="0 0 20 18"><path d="M2.4 2.6 H7.4 L9 4.8 H17.4 V15.4 H2.4 Z" fill="#333"/></svg>
<svg style="left:149.8px;top:839px;" width="20" height="20" viewBox="0 0 20 20"><path d="M2.8 2.6 H8.2 L11.6 6 V13 H2.8 Z" fill="none" stroke="#333" stroke-width="1.9" stroke-linejoin="round"/><path d="M7.8 2.4 L11.8 6.4 H7.8Z" fill="#333"/><path d="M13.6 6.4 H17 V17.2 H8.6 V15" fill="none" stroke="#333" stroke-width="1.9" stroke-linejoin="miter"/></svg>
<div class="vsep" style="left:178.3px;top:834px;height:32px"></div>
<svg style="left:189.5px;top:838.4px;" width="20" height="22" viewBox="0 0 20 22"><path d="M1.8 6.2 H18.2" stroke="#333" stroke-width="2" /><path d="M7.6 5.6 V3.6 H12.4 V5.6" fill="none" stroke="#333" stroke-width="1.8"/><path d="M4.6 7 V18.4 H15.4 V7" fill="none" stroke="#333" stroke-width="1.9"/></svg>
<div style="left:315.5px;top:54px;width:1060.5px;height:25.5px;background:linear-gradient(#fbfbfb 0,#f0f0f0 1px,#efefef 12px,#e4e4e4 12.4px,#ededed 13px,#ececec 24px,#f4f4f4 25.5px)"></div>
<div style="left:672.5px;top:54.5px;width:346px;height:24px;background:#fff;border-radius:5.5px;box-shadow:0 0 0 0.7px rgba(0,0,0,.28)"></div>
<div style="left:315.5px;top:79px;width:1036.5px;height:766px;background:#717171;box-shadow:inset 0 -1px 0 #666"></div>
<svg style="left:315.5px;top:79px;" width="1036.5" height="766" viewBox="315.5 79 1036.5 766"><defs><pattern id="chk" width="18.65" height="18.65" patternUnits="userSpaceOnUse" x="500.65" y="154.55"><rect width="18.65" height="18.65" fill="#fbfbfb"/><rect width="9.325" height="9.325" fill="#e7e7e7"/><rect x="9.325" y="9.325" width="9.325" height="9.325" fill="#e7e7e7"/></pattern><radialGradient id="sun" cx="505" cy="165" r="206" gradientUnits="userSpaceOnUse"><stop offset="0" stop-color="#f8e98c"/><stop offset=".35" stop-color="#f8e67c"/><stop offset=".62" stop-color="#f6e16c"/><stop offset=".8" stop-color="#f5d95a"/><stop offset=".9" stop-color="#f5db5d"/><stop offset=".95" stop-color="#f6e36e"/><stop offset=".985" stop-color="#f7e675"/><stop offset="1" stop-color="#f7e675" stop-opacity="0"/></radialGradient><clipPath id="pg"><rect x="501" y="162" width="648" height="700"/></clipPath><filter id="b1"><feGaussianBlur stdDeviation="1.2"/></filter></defs><g stroke="#000" stroke-width="2.1" fill="none"><path d="M502.2 93.5V162.6 M512.2 93.5V162 M431.5 162.6H501.2 M431.5 173.5H501.2"/><path d="M825 93.5V162"/><path d="M1138.7 93.5V162 M1149 93.5V163.6 M1148 162.5H1218 M1148 173.6H1218"/><path d="M431.5 616.5H501 M1149 616.5H1218"/></g><rect x="500.8" y="162" width="648" height="700" fill="url(#chk)"/><g clip-path="url(#pg)"><circle cx="505" cy="165" r="206" fill="url(#sun)"/><path d="M640 168 C 642 200, 632 240, 606 262" stroke="#fbf3b8" stroke-width="3" fill="none" opacity=".55" filter="url(#b1)"/><path d="M505 302 C 560 305, 620 270, 640 215" stroke="#faf0a6" stroke-width="4" fill="none" opacity=".35" filter="url(#b1)"/><path d="M501 162 H1149 V862 H501 Z M511.5 172.8 V862 H1138.5 V172.8 Z" fill="#fff" fill-rule="evenodd" opacity=".2"/></g><g stroke="#86d3d6" stroke-width="1.1" fill="none"><rect x="501.2" y="162.4" width="647.2" height="700"/><rect x="511.2" y="172.9" width="627" height="700"/><rect x="566.6" y="237.2" width="516.7" height="700"/><path d="M824.1 600V634 M807 616.2H842" stroke="#a6dde1"/></g><path d="M793.9 251.6 C791.4 255.6 785.1 266.5 778.8 275.9 C772.4 285.3 766.5 293.4 755.8 308.1 C745.1 322.7 727.5 346.5 714.5 364.1 C701.5 381.7 691.5 393.9 677.7 413.7 C664.0 433.4 647.1 458.8 631.8 482.5 C616.5 506.2 597.0 538.8 585.9 556.0 C574.8 573.2 569.5 579.2 565.3 585.8 C561.0 592.5 561.3 596.3 560.7 595.9 C560.0 595.5 561.4 585.6 561.6 583.5" fill="none" stroke="#1e1e1e" stroke-width="1.1" stroke-linejoin="round"/><path d="M793.9 251.6 C794.4 252.7 793.5 252.1 797.1 258.5 C800.7 264.8 805.5 272.6 815.5 289.7 C825.4 306.8 847.6 342.9 856.8 360.9 C866.0 378.8 862.2 379.6 870.6 397.6 C879.0 415.6 895.8 450.0 907.3 468.8 C918.8 487.5 929.1 498.4 939.4 510.1 C949.8 521.7 957.8 527.1 969.3 538.5 C980.8 550.0 996.5 568.4 1008.3 578.9 C1020.2 589.5 1031.7 595.2 1040.5 601.9 C1049.3 608.6 1057.7 616.4 1061.1 619.3" fill="none" stroke="#1e1e1e" stroke-width="1.1" stroke-linejoin="round"/><path d="M857.7 360.9 C861.0 364.3 869.2 374.6 877.5 381.5 C885.7 388.4 901.9 399.3 907.3 402.2 C912.7 405.1 909.1 397.0 910.1 399.0 C911.0 400.9 911.6 405.1 912.8 413.7 C914.0 422.2 913.0 437.4 917.4 450.4 C921.8 463.4 931.9 478.7 939.4 491.7 C946.9 504.7 957.3 519.9 962.4 528.4 C967.5 537.0 968.9 540.7 970.2 543.1" fill="none" stroke="#1e1e1e" stroke-width="1.1" stroke-linejoin="round"/><path d="M804.0 406.8 C808.2 404.5 812.7 414.0 815.5 422.8 C818.3 431.6 819.3 448.9 821.0 459.6 C822.7 470.3 825.4 475.6 825.6 487.1 C825.8 498.6 824.8 515.4 822.4 528.4 C819.9 541.4 814.6 555.4 810.9 565.2 C807.1 575.0 803.1 586.4 799.9 587.2 C796.7 588.0 794.5 578.8 791.6 569.8 C788.7 560.7 784.2 544.5 782.4 533.0 C780.7 521.6 780.5 511.6 781.0 500.9 C781.6 490.2 784.1 479.5 785.6 468.8 C787.2 458.0 787.2 446.9 790.2 436.6 C793.3 426.3 799.8 409.1 804.0 406.8 Z" fill="#b0adad"/><path d="M763.6 326.9 C763.2 329.5 757.7 341.7 754.4 348.3 C751.0 355.0 745.0 360.3 743.3 366.8 C741.6 373.3 745.1 380.4 744.0 387.1 C743.0 393.9 740.3 400.6 737.0 407.4 C733.7 414.3 729.4 420.9 724.1 428.5 C718.7 436.1 711.1 445.1 704.9 452.9 C698.6 460.6 692.9 468.6 686.4 475.0 C679.9 481.5 671.7 486.6 665.7 491.3 C659.7 496.0 655.7 496.8 650.2 503.5 C644.6 510.1 638.5 522.6 632.5 531.2 C626.4 539.8 620.0 548.1 614.0 555.2 C608.0 562.4 598.3 573.9 596.3 574.1 C594.2 574.2 598.1 564.0 601.4 556.3 C604.8 548.7 611.5 537.2 616.2 528.2 C620.9 519.3 625.8 508.9 629.5 502.4 C633.2 495.9 637.6 492.9 638.4 489.1 C639.2 485.3 634.6 483.2 634.3 479.5 C634.0 475.7 634.2 471.2 636.5 466.6 C638.8 461.9 644.2 456.4 648.0 451.8 C651.7 447.2 655.4 443.8 659.1 438.8 C662.7 433.9 666.7 428.9 670.1 422.2 C673.6 415.6 676.3 405.9 679.7 399.0 C683.2 392.0 686.3 385.7 690.8 380.5 C695.3 375.2 701.5 370.4 706.7 367.6 C711.9 364.7 717.4 363.9 721.9 363.5 C726.3 363.1 729.6 368.0 733.7 365.0 C737.7 361.9 742.4 350.7 746.2 345.4 C750.1 340.0 753.7 335.9 756.6 332.8 C759.5 329.7 764.0 324.3 763.6 326.9 Z" fill="#878484"/><path d="M790.2 294.3 C790.9 296.6 791.3 312.5 791.1 321.8 C791.0 331.2 789.2 343.8 789.3 350.3 C789.4 356.8 789.2 360.9 791.6 360.9 C794.1 360.9 799.3 352.6 804.0 350.3 C808.7 348.0 815.1 346.1 820.1 347.1 C825.0 348.1 830.8 351.3 833.8 356.3 C836.9 361.2 838.3 368.5 838.4 376.9 C838.6 385.3 836.7 395.3 834.8 406.8 C832.9 418.2 829.4 432.4 827.0 445.8 C824.5 459.2 821.8 476.0 820.1 487.1 C818.4 498.2 818.0 512.4 816.9 512.4 C815.7 512.4 814.3 498.2 813.2 487.1 C812.0 476.0 810.9 459.2 810.0 445.8 C809.1 432.4 811.3 406.8 807.7 406.8 C804.0 406.8 795.1 432.4 787.9 445.8 C780.8 459.2 771.5 474.9 765.0 487.1 C758.5 499.4 754.3 511.0 748.9 519.3 C743.6 527.5 738.2 533.5 732.8 536.7 C727.5 539.9 721.5 539.9 716.8 538.5 C712.0 537.2 706.8 533.2 704.4 528.4 C701.9 523.7 700.8 517.0 702.1 510.1 C703.4 503.2 707.0 497.1 712.2 487.1 C717.3 477.2 725.6 463.4 732.8 450.4 C740.1 437.4 749.3 422.8 755.8 409.1 C762.3 395.3 767.7 380.0 771.9 367.7 C776.1 355.5 778.5 345.5 781.0 335.6 C783.6 325.7 785.5 314.9 787.0 308.1 C788.5 301.2 789.5 292.0 790.2 294.3 Z" fill="#878484"/><circle cx="335" cy="344" r="29.8" fill="none" stroke="#2a2a2a" stroke-width="2.4" opacity=".8"/><circle cx="335" cy="344" r="29.4" fill="none" stroke="#fff" stroke-width="1.3"/></svg>
<svg style="left:1304px;top:86px;" width="42" height="42" viewBox="0 0 42 42"><defs><clipPath id="av"><circle cx="20.3" cy="22.2" r="16.4"/></clipPath></defs><circle cx="20.3" cy="22.2" r="16.9" fill="#1c1512"/><g clip-path="url(#av)"><path d="M3 40 L3.5 24 L6.5 18 L7.5 24 L10.5 15 L11.5 24 L13 21 L14 40Z" fill="#e2692c"/><path d="M37.6 40 L37 24 L34 18 L33 24 L30.5 15 L29.5 24 L28 21 L27 40Z" fill="#e2692c"/><path d="M5 30 L7 25 L8.5 31 L10.5 24 L12 32 Z M35.6 30 L33.6 25 L32 31 L30 24 L28.6 32Z" fill="#f0a060"/></g><defs><clipPath id="av2"><circle cx="20.3" cy="22.2" r="15.6"/><rect x="0" y="0" width="42" height="16"/></clipPath></defs><path clip-path="url(#av2)" d="M13 42 C14 34 13.4 28 12.6 24 C10.4 21 10.2 13.6 12.2 9.4 L10.8 3.4 L14.8 6.6 C18 4.8 22.6 4.8 25.8 6.6 L29.8 3.4 L28.4 9.4 C30.4 13.6 30.2 21 28 24 C27.2 28 26.6 34 27.6 42Z" fill="#fdfdfd"/><path d="M15.2 14.4 L17.8 15.2 M25.4 14.4 L22.8 15.2" stroke="#333" stroke-width="1.2" stroke-linecap="round"/><path d="M19.4 17 H21.2 L20.3 18.4Z" fill="#444"/><path d="M20.3 18.4 V19.6 M18.8 20 Q20.3 21 21.8 20" stroke="#777" stroke-width=".7" fill="none"/><path d="M16.8 22.6 L20.3 24.4 L23.8 22.6 V27 L20.3 25.2 L16.8 27Z" fill="#b5562a"/><rect x="19.3" y="23.8" width="2" height="2" fill="#8a3d1c"/></svg>
<svg style="left:1304px;top:133px;" width="42" height="42" viewBox="0 0 42 42"><circle cx="20" cy="20.4" r="18.5" fill="#2f98f0"/><path d="M13.6 33.6 V14.6 C13.4 13 12.4 12.4 10.6 13.4" fill="none" stroke="#fff" stroke-width="1.9" stroke-linecap="round"/><path d="M13.8 17 C15.6 12.6 21.4 10.6 25.8 12.4 C29.8 14 31.6 18.4 29.8 22.4 C27.8 26.6 22.4 28.4 16.6 27.2 L14 26.6" fill="none" stroke="#fff" stroke-width="2.5" stroke-linecap="round"/></svg>
<div style="left:1352px;top:79px;width:23.5px;height:790px;background:#fafafa"></div>
<div style="left:1360px;top:334px;width:8.2px;height:182px;background:#c1c1c1;border-radius:4.2px"></div>
<div style="left:1375.5px;top:54px;width:1px;height:815px;background:#a2a2a2"></div>
<div style="left:1376.5px;top:54px;width:1px;height:815px;background:#f8f8f8"></div>
<div style="left:315.5px;top:845px;width:1060px;height:24px;background:#fafafa"></div>
<div style="left:704px;top:853.5px;width:288.5px;height:9.5px;background:#c1c1c1;border-radius:4.8px"></div>
<div style="left:1377.5px;top:56px;width:302.5px;height:815px;background:#ececec"></div>
<div style="left:1377.5px;top:53.5px;width:302.5px;height:1px;background:#bdbdbd"></div>
<div style="left:1377.5px;top:54.5px;width:302.5px;height:25.5px;background:linear-gradient(#fafafa 0,#f4f4f4 1px,#ececec 1.6px,#e6e6e6 9px,#d5d5d5 24.3px,#b9b9b9 24.6px,#b9b9b9 25.5px)"></div>
<svg style="left:1379.4px;top:57.8px;" width="17" height="17" viewBox="0 0 17 17"><circle cx="8.5" cy="8.5" r="8" fill="#3c3c3c"/><path d="M5 5 L12 12 M12 5 L5 12" stroke="#fff" stroke-width="2.5" stroke-linecap="butt"/></svg>
<svg style="left:1400.4px;top:57.8px;" width="17" height="17" viewBox="0 0 17 17"><circle cx="8.5" cy="8.5" r="8" fill="#3c3c3c"/><path d="M7.4 5.6 H12.6 Q13.6 5.6 13.6 6.6 V9.4 Q13.6 10.4 12.6 10.4" fill="none" stroke="#d9d9d9" stroke-width="1"/><rect x="4.6" y="8.3" width="6.6" height="4" rx="1.1" fill="#3c3c3c" stroke="#fff" stroke-width="1.7"/></svg>
<span class="t" style="left:1521.00px;top:60.50px;font-size:12.85px;line-height:15px;height:15px;color:#000;-webkit-text-stroke:0.63px #000;">Navigator</span>
<div style="left:1377.5px;top:80px;width:302.5px;height:34.5px;background:linear-gradient(#f0f0f0,#e6e6e6 50%,#d6d6d6);border-bottom:1px solid #c2c2c2"></div>
<svg style="left:1377.5px;top:80px;" width="250" height="35" viewBox="1377.5 80 250 35"><circle cx="1392.4" cy="96" r="4.6" fill="none" stroke="#383838" stroke-width="2"/><path d="M1396.0 99.6 L1399.7 103.3" stroke="#383838" stroke-width="2.7" stroke-linecap="round"/><path d="M1390.0 96H1394.8000000000002 M1392.4 93.6V98.4" stroke="#383838" stroke-width="1.3"/><circle cx="1425.2" cy="96" r="4.6" fill="none" stroke="#383838" stroke-width="2"/><path d="M1428.8 99.6 L1432.5 103.3" stroke="#383838" stroke-width="2.7" stroke-linecap="round"/><path d="M1422.8 96H1427.6000000000001" stroke="#383838" stroke-width="1.4"/><circle cx="1458.4" cy="97" r="3.6" fill="none" stroke="#383838" stroke-width="1.8"/><path d="M1461 99.8 L1464.6 103.4" stroke="#383838" stroke-width="2.3" stroke-linecap="round"/><path d="M1452.4 94.6 V90.8 H1456.2 M1462.4 90.8 H1466.2 V94.6 M1452.4 100.6 V104.4 H1456.2" fill="none" stroke="#383838" stroke-width="2"/><path d="M1505.07 97.73 A6.0 6.0 0 1 0 1495.41 101.83" fill="none" stroke="#383838" stroke-width="2.5"/><path d="M1490.8 104.4 H1498.7 V96.2 Z" fill="#383838"/><rect x="-0.9" y="-7.2" width="1.8" height="2.7" rx=".8" fill="#8e8e8e" transform="translate(1531.7 97.4) rotate(0)"/><rect x="-0.9" y="-7.2" width="1.8" height="2.7" rx=".8" fill="#8e8e8e" transform="translate(1531.7 97.4) rotate(45)"/><rect x="-0.9" y="-7.2" width="1.8" height="2.7" rx=".8" fill="#8e8e8e" transform="translate(1531.7 97.4) rotate(90)"/><rect x="-0.9" y="-7.2" width="1.8" height="2.7" rx=".8" fill="#8e8e8e" transform="translate(1531.7 97.4) rotate(135)"/><rect x="-0.9" y="-7.2" width="1.8" height="2.7" rx=".8" fill="#8e8e8e" transform="translate(1531.7 97.4) rotate(180)"/><rect x="-0.9" y="-7.2" width="1.8" height="2.7" rx=".8" fill="#8e8e8e" transform="translate(1531.7 97.4) rotate(225)"/><rect x="-0.9" y="-7.2" width="1.8" height="2.7" rx=".8" fill="#8e8e8e" transform="translate(1531.7 97.4) rotate(270)"/><rect x="-0.9" y="-7.2" width="1.8" height="2.7" rx=".8" fill="#8e8e8e" transform="translate(1531.7 97.4) rotate(315)"/><path d="M1558.03 97.73 A6.0 6.0 0 1 1 1567.69 101.83" fill="none" stroke="#383838" stroke-width="2.5"/><path d="M1572.3 104.4 H1564.4 V96.2 Z" fill="#383838"/><path d="M1598.2 94.6 L1603 99.4 L1598.2 104.2 Z" fill="none" stroke="#8a8a8a" stroke-width="1.1"/><path d="M1611.6 94.2 L1606.4 99.4 L1611.6 104.6 Z" fill="#444"/><path d="M1604.8 93 V105" stroke="#444" stroke-width="1.5"/><path d="M1600.2 93.4 C1602 90.6 1606 90.2 1608.6 92.4" fill="none" stroke="#777" stroke-width="1.2"/><path d="M1609.8 90.6 L1609.6 94 L1606.6 92.8Z" fill="#666"/></svg>
<div class="vsep" style="left:1478.0px;top:81px;height:33px"></div>
<div class="vsep" style="left:1583.5px;top:81px;height:33px"></div>
<div style="left:1377.5px;top:115px;width:302.5px;height:162px;background:#808080;overflow:hidden"></div>
<svg style="left:1377.5px;top:115px;" width="302.5" height="162" viewBox="1377.5 115 302.5 162"><defs><radialGradient id="nsun" cx="505" cy="165" r="206" gradientUnits="userSpaceOnUse"><stop offset="0" stop-color="#f9ec96"/><stop offset=".5" stop-color="#f8e77a"/><stop offset=".8" stop-color="#f5dc5d"/><stop offset=".93" stop-color="#f6e26a"/><stop offset=".97" stop-color="#f7e777"/><stop offset="1" stop-color="#f7e777" stop-opacity="0"/></radialGradient><clipPath id="npg"><rect x="1470.8" y="115" width="114.8" height="162"/></clipPath></defs><rect x="1470.8" y="115" width="114.8" height="162" fill="#fff"/><g clip-path="url(#npg)"><g transform="translate(1470.8 115.4) scale(0.1774) translate(-501.2 -162.4)"><circle cx="505" cy="165" r="206" fill="url(#nsun)"/><path d="M793.9 251.6 C791.4 255.6 785.1 266.5 778.8 275.9 C772.4 285.3 766.5 293.4 755.8 308.1 C745.1 322.7 727.5 346.5 714.5 364.1 C701.5 381.7 691.5 393.9 677.7 413.7 C664.0 433.4 647.1 458.8 631.8 482.5 C616.5 506.2 597.0 538.8 585.9 556.0 C574.8 573.2 569.5 579.2 565.3 585.8 C561.0 592.5 561.3 596.3 560.7 595.9 C560.0 595.5 561.4 585.6 561.6 583.5" fill="none" stroke="#b2b2b2" stroke-width="3.4" stroke-linejoin="round"/><path d="M793.9 251.6 C794.4 252.7 793.5 252.1 797.1 258.5 C800.7 264.8 805.5 272.6 815.5 289.7 C825.4 306.8 847.6 342.9 856.8 360.9 C866.0 378.8 862.2 379.6 870.6 397.6 C879.0 415.6 895.8 450.0 907.3 468.8 C918.8 487.5 929.1 498.4 939.4 510.1 C949.8 521.7 957.8 527.1 969.3 538.5 C980.8 550.0 996.5 568.4 1008.3 578.9 C1020.2 589.5 1031.7 595.2 1040.5 601.9 C1049.3 608.6 1057.7 616.4 1061.1 619.3" fill="none" stroke="#b2b2b2" stroke-width="3.4" stroke-linejoin="round"/><path d="M857.7 360.9 C861.0 364.3 869.2 374.6 877.5 381.5 C885.7 388.4 901.9 399.3 907.3 402.2 C912.7 405.1 909.1 397.0 910.1 399.0 C911.0 400.9 911.6 405.1 912.8 413.7 C914.0 422.2 913.0 437.4 917.4 450.4 C921.8 463.4 931.9 478.7 939.4 491.7 C946.9 504.7 957.3 519.9 962.4 528.4 C967.5 537.0 968.9 540.7 970.2 543.1" fill="none" stroke="#cfcfcf" stroke-width="3" stroke-linejoin="round"/><path d="M804.0 406.8 C808.2 404.5 812.7 414.0 815.5 422.8 C818.3 431.6 819.3 448.9 821.0 459.6 C822.7 470.3 825.4 475.6 825.6 487.1 C825.8 498.6 824.8 515.4 822.4 528.4 C819.9 541.4 814.6 555.4 810.9 565.2 C807.1 575.0 803.1 586.4 799.9 587.2 C796.7 588.0 794.5 578.8 791.6 569.8 C788.7 560.7 784.2 544.5 782.4 533.0 C780.7 521.6 780.5 511.6 781.0 500.9 C781.6 490.2 784.1 479.5 785.6 468.8 C787.2 458.0 787.2 446.9 790.2 436.6 C793.3 426.3 799.8 409.1 804.0 406.8 Z" fill="#b3b0b0"/><path d="M763.6 326.9 C763.2 329.5 757.7 341.7 754.4 348.3 C751.0 355.0 745.0 360.3 743.3 366.8 C741.6 373.3 745.1 380.4 744.0 387.1 C743.0 393.9 740.3 400.6 737.0 407.4 C733.7 414.3 729.4 420.9 724.1 428.5 C718.7 436.1 711.1 445.1 704.9 452.9 C698.6 460.6 692.9 468.6 686.4 475.0 C679.9 481.5 671.7 486.6 665.7 491.3 C659.7 496.0 655.7 496.8 650.2 503.5 C644.6 510.1 638.5 522.6 632.5 531.2 C626.4 539.8 620.0 548.1 614.0 555.2 C608.0 562.4 598.3 573.9 596.3 574.1 C594.2 574.2 598.1 564.0 601.4 556.3 C604.8 548.7 611.5 537.2 616.2 528.2 C620.9 519.3 625.8 508.9 629.5 502.4 C633.2 495.9 637.6 492.9 638.4 489.1 C639.2 485.3 634.6 483.2 634.3 479.5 C634.0 475.7 634.2 471.2 636.5 466.6 C638.8 461.9 644.2 456.4 648.0 451.8 C651.7 447.2 655.4 443.8 659.1 438.8 C662.7 433.9 666.7 428.9 670.1 422.2 C673.6 415.6 676.3 405.9 679.7 399.0 C683.2 392.0 686.3 385.7 690.8 380.5 C695.3 375.2 701.5 370.4 706.7 367.6 C711.9 364.7 717.4 363.9 721.9 363.5 C726.3 363.1 729.6 368.0 733.7 365.0 C737.7 361.9 742.4 350.7 746.2 345.4 C750.1 340.0 753.7 335.9 756.6 332.8 C759.5 329.7 764.0 324.3 763.6 326.9 Z" fill="#8b8888"/><path d="M790.2 294.3 C790.9 296.6 791.3 312.5 791.1 321.8 C791.0 331.2 789.2 343.8 789.3 350.3 C789.4 356.8 789.2 360.9 791.6 360.9 C794.1 360.9 799.3 352.6 804.0 350.3 C808.7 348.0 815.1 346.1 820.1 347.1 C825.0 348.1 830.8 351.3 833.8 356.3 C836.9 361.2 838.3 368.5 838.4 376.9 C838.6 385.3 836.7 395.3 834.8 406.8 C832.9 418.2 829.4 432.4 827.0 445.8 C824.5 459.2 821.8 476.0 820.1 487.1 C818.4 498.2 818.0 512.4 816.9 512.4 C815.7 512.4 814.3 498.2 813.2 487.1 C812.0 476.0 810.9 459.2 810.0 445.8 C809.1 432.4 811.3 406.8 807.7 406.8 C804.0 406.8 795.1 432.4 787.9 445.8 C780.8 459.2 771.5 474.9 765.0 487.1 C758.5 499.4 754.3 511.0 748.9 519.3 C743.6 527.5 738.2 533.5 732.8 536.7 C727.5 539.9 721.5 539.9 716.8 538.5 C712.0 537.2 706.8 533.2 704.4 528.4 C701.9 523.7 700.8 517.0 702.1 510.1 C703.4 503.2 707.0 497.1 712.2 487.1 C717.3 477.2 725.6 463.4 732.8 450.4 C740.1 437.4 749.3 422.8 755.8 409.1 C762.3 395.3 767.7 380.0 771.9 367.7 C776.1 355.5 778.5 345.5 781.0 335.6 C783.6 325.7 785.5 314.9 787.0 308.1 C788.5 301.2 789.5 292.0 790.2 294.3 Z" fill="#8b8888"/></g></g><path d="M1441.5 115 V235.2 H1620.8 V115" fill="none" stroke="#e8412f" stroke-width="2.5"/></svg>
<div style="left:1377.5px;top:277.5px;width:302.5px;height:1px;background:#bdbdbd"></div>
<div style="left:1377.5px;top:278.5px;width:302.5px;height:25.5px;background:linear-gradient(#fafafa 0,#f4f4f4 1px,#ececec 1.6px,#e6e6e6 9px,#d5d5d5 24.3px,#b9b9b9 24.6px,#b9b9b9 25.5px)"></div>
<svg style="left:1379.4px;top:281.8px;" width="17" height="17" viewBox="0 0 17 17"><circle cx="8.5" cy="8.5" r="8" fill="#3c3c3c"/><path d="M5 5 L12 12 M12 5 L5 12" stroke="#fff" stroke-width="2.5" stroke-linecap="butt"/></svg>
<svg style="left:1400.4px;top:281.8px;" width="17" height="17" viewBox="0 0 17 17"><circle cx="8.5" cy="8.5" r="8" fill="#3c3c3c"/><path d="M7.4 5.6 H12.6 Q13.6 5.6 13.6 6.6 V9.4 Q13.6 10.4 12.6 10.4" fill="none" stroke="#d9d9d9" stroke-width="1"/><rect x="4.6" y="8.3" width="6.6" height="4" rx="1.1" fill="#3c3c3c" stroke="#fff" stroke-width="1.7"/></svg>
<span class="t" style="left:1531.80px;top:284.00px;font-size:13.19px;line-height:16px;height:16px;color:#000;-webkit-text-stroke:0.63px #000;">Layer</span>
<span class="t" style="left:1383.80px;top:311.20px;font-size:15.93px;line-height:19px;height:19px;color:#000;-webkit-text-stroke:0.73px #000;">Opacity</span>
<div class="bar" style="left:1457px;top:310.7px;width:160px;height:18.6px"></div>
<span class="t" style="left:1628.40px;top:311.70px;font-size:15.2px;line-height:18px;height:18px;color:#000;-webkit-text-stroke:0.73px #000;transform:scaleX(1.0093);transform-origin:0 50%;">100 %</span>
<span class="t" style="left:1383.80px;top:345.50px;font-size:15.54px;line-height:19px;height:19px;color:#000;-webkit-text-stroke:0.73px #000;">Blending</span>
<div class="sel" style="left:1461.5px;top:343px;width:206.5px;height:22.5px"></div>
<span class="t" style="left:1472.00px;top:344.10px;font-size:15.52px;line-height:19px;height:19px;color:#000;-webkit-text-stroke:0.63px #000;">Normal</span>
<div class="step" style="left:1648px;top:345px;width:17.5px;height:18.5px"></div>
<svg style="left:1648px;top:345px;" width="17.5" height="18.5" viewBox="0 0 17.5 18.5"><path d="M5.55 7.05 L8.75 3.6500000000000004 L11.95 7.05 M5.55 11.45 L8.75 14.85 L11.95 11.45" fill="none" stroke="#fff" stroke-width="1.7" stroke-linecap="round" stroke-linejoin="round"/></svg>
<div class="cb" style="left:1386.5px;top:387.3px;width:15px;height:15px;"></div>
<span class="t" style="left:1407.50px;top:385.80px;font-size:15.89px;line-height:19px;height:19px;color:#000;-webkit-text-stroke:0.73px #000;">Protect Alpha</span>
<div class="cb" style="left:1512.8px;top:387.3px;width:15px;height:15px;opacity:.55;"></div>
<span class="t" style="left:1533.80px;top:385.80px;font-size:15.64px;line-height:19px;height:19px;color:#9c9c9c;-webkit-text-stroke:0.42px #9c9c9c;">Clipping</span>
<div class="cb" style="left:1601.2px;top:387.3px;width:15px;height:15px;"></div>
<span class="t" style="left:1622.20px;top:386.30px;font-size:15.39px;line-height:18px;height:18px;color:#000;-webkit-text-stroke:0.73px #000;">Lock</span>
<div class="cb" style="left:1386.5px;top:419.8px;width:15px;height:15px;"></div>
<div style="left:1379px;top:443.5px;width:275.5px;height:115.5px;background:#fff;border-left:1px solid #333;border-right:1px solid #333;overflow:hidden"></div>
<div style="left:1655px;top:443.5px;width:25px;height:115.5px;background:#f7f7f7"></div>
<div style="left:1402px;top:513px;width:252.5px;height:46px;background:#a6cff5"></div>
<div style="left:1379px;top:465.9px;width:275.5px;height:1px;background:#222"></div>
<div style="left:1379px;top:512.5px;width:275.5px;height:1px;background:#222"></div>
<div style="left:1379px;top:558.3px;width:275.5px;height:1px;background:#222"></div>
<div style="left:1401.2px;top:443.5px;width:1px;height:115.5px;background:#222"></div>
<div style="left:1420px;top:421px;width:29px;height:42px;border:1px solid #777;background-color:#fcfcfc;background-image:linear-gradient(45deg,#e3e3e3 25%,transparent 25%,transparent 75%,#e3e3e3 75%),linear-gradient(45deg,#e3e3e3 25%,transparent 25%,transparent 75%,#e3e3e3 75%);background-size:9px 9px;background-position:0 0,4.5px 4.5px"></div>
<div style="left:1420px;top:468px;width:29px;height:42px;border:1px solid #777;background-color:#fcfcfc;background-image:linear-gradient(45deg,#e3e3e3 25%,transparent 25%,transparent 75%,#e3e3e3 75%),linear-gradient(45deg,#e3e3e3 25%,transparent 25%,transparent 75%,#e3e3e3 75%);background-size:9px 9px;background-position:0 0,4.5px 4.5px"></div>
<div style="left:1420px;top:515px;width:29px;height:42px;border:1px solid #777;background-color:#fcfcfc;background-image:linear-gradient(45deg,#e3e3e3 25%,transparent 25%,transparent 75%,#e3e3e3 75%),linear-gradient(45deg,#e3e3e3 25%,transparent 25%,transparent 75%,#e3e3e3 75%);background-size:9px 9px;background-position:0 0,4.5px 4.5px"></div>
<div style="left:1403px;top:420px;width:252px;height:23.5px;background:#ececec"></div>
<div class="cb" style="left:1386.5px;top:419.8px;width:15px;height:15px;"></div>
<div style="left:1386.2px;top:439.0px;width:9.2px;height:9.2px;background:#cfcfcf;border-radius:50%;box-shadow:inset 0 0 0 1px #a9a9a9"></div>
<div style="left:1386.2px;top:485.4px;width:9.2px;height:9.2px;background:#cfcfcf;border-radius:50%;box-shadow:inset 0 0 0 1px #a9a9a9"></div>
<div style="left:1386.2px;top:532.4px;width:9.2px;height:9.2px;background:#cfcfcf;border-radius:50%;box-shadow:inset 0 0 0 1px #a9a9a9"></div>
<div style="left:1379px;top:436px;width:24px;height:7.5px;background:#ececec"></div>
<div class="cb" style="left:1386.5px;top:419.8px;width:15px;height:15px;"></div>
<span class="t" style="left:1407.50px;top:418.50px;font-size:15.72px;line-height:19px;height:19px;color:#000;-webkit-text-stroke:0.73px #000;">Show only Active Layer</span>
<span class="t" style="left:1465.5px;top:435px;font-size:15.5px;line-height:18px;height:18px;color:#111;-webkit-text-stroke:.4px #111;clip-path:inset(8.6px 0 0 0)">Layer1</span>
<span class="t" style="left:1465.50px;top:482.00px;font-size:15.21px;line-height:18px;height:18px;color:#111;-webkit-text-stroke:0.84px #111;">Layer2</span>
<span class="t" style="left:1465.50px;top:528.00px;font-size:16.59px;line-height:20px;height:20px;color:#111;font-weight:bold;-webkit-text-stroke:0.15px #111;">Layer5</span>
<svg style="left:1627.8px;top:526.0999999999999px;" width="22.4" height="22.4" viewBox="0 0 22.4 22.4"><g transform="translate(11.2 11.2)"><rect x="-1.94" y="-10.20" width="3.88" height="4.28" transform="rotate(0)" fill="#7b7b7b"/><rect x="-1.94" y="-10.20" width="3.88" height="4.28" transform="rotate(45)" fill="#7b7b7b"/><rect x="-1.94" y="-10.20" width="3.88" height="4.28" transform="rotate(90)" fill="#7b7b7b"/><rect x="-1.94" y="-10.20" width="3.88" height="4.28" transform="rotate(135)" fill="#7b7b7b"/><rect x="-1.94" y="-10.20" width="3.88" height="4.28" transform="rotate(180)" fill="#7b7b7b"/><rect x="-1.94" y="-10.20" width="3.88" height="4.28" transform="rotate(225)" fill="#7b7b7b"/><rect x="-1.94" y="-10.20" width="3.88" height="4.28" transform="rotate(270)" fill="#7b7b7b"/><rect x="-1.94" y="-10.20" width="3.88" height="4.28" transform="rotate(315)" fill="#7b7b7b"/><circle r="7.34" fill="#7b7b7b"/><circle r="3.06" fill="#fff"/></g></svg>
<div style="left:1662.3px;top:503.5px;width:8.4px;height:54px;background:#bdbdbd;border-radius:4.2px"></div>
<div style="left:1379px;top:559.5px;width:298.5px;height:35.5px;background:linear-gradient(#ededed,#e4e4e4 50%,#d4d4d4);border-bottom:1px solid #c0c0c0"></div>
<svg style="left:1387.3px;top:567px;" width="18" height="20" viewBox="0 0 18 20"><path d="M3.4 2.6 H10 L14.8 7.4 V17.4 H3.4 Z" fill="none" stroke="#333" stroke-width="1.9" stroke-linejoin="round"/><path d="M9.6 2.4 L15 7.8 H9.6 Z" fill="#333"/></svg>
<svg style="left:1420.3px;top:567px;" width="18" height="20" viewBox="0 0 18 20"><path d="M3.4 2.6 H10 L14.8 7.4 V17.4 H3.4 Z" fill="none" stroke="#333" stroke-width="1.9" stroke-linejoin="round"/><text x="9.1" y="15" font-family="Liberation Sans" font-size="9.6" font-weight="bold" text-anchor="middle" fill="#333">8</text></svg>
<svg style="left:1452.7px;top:567px;" width="18" height="20" viewBox="0 0 18 20"><path d="M3.4 2.6 H10 L14.8 7.4 V17.4 H3.4 Z" fill="none" stroke="#333" stroke-width="1.9" stroke-linejoin="round"/><text x="9.1" y="15" font-family="Liberation Sans" font-size="9.6" font-weight="bold" text-anchor="middle" fill="#333">1</text></svg>
<svg style="left:1483.8px;top:568.4px;" width="20" height="18" viewBox="0 0 20 18"><path d="M2.4 2.6 H7.4 L9 4.8 H17.4 V15.4 H2.4 Z" fill="#333"/></svg>
<div class="vsep" style="left:1513.0px;top:561.5px;height:30.0px"></div>
<svg style="left:1523.8px;top:566.6px;" width="20" height="20" viewBox="0 0 20 20"><path d="M2.8 2.6 H8.2 L11.6 6 V13 H2.8 Z" fill="none" stroke="#333" stroke-width="1.9" stroke-linejoin="round"/><path d="M7.8 2.4 L11.8 6.4 H7.8Z" fill="#333"/><path d="M13.6 6.4 H17 V17.2 H8.6 V15" fill="none" stroke="#333" stroke-width="1.9" stroke-linejoin="miter"/></svg>
<svg style="left:1556.5px;top:566px;" width="20" height="22" viewBox="0 0 20 22"><path d="M10 3 V10.6" stroke="#a2a2a2" stroke-width="3.2"/><path d="M5 9.2 H15 L10 14.6Z" fill="#a2a2a2"/><path d="M2.4 16.6 H17.6 M2.4 20 H17.6" stroke="#a2a2a2" stroke-width="1.6"/></svg>
<div class="vsep" style="left:1585.2px;top:561.5px;height:30.0px"></div>
<svg style="left:1596.6px;top:566px;" width="20" height="22" viewBox="0 0 20 22"><path d="M1.8 6.2 H18.2" stroke="#333" stroke-width="2" /><path d="M7.6 5.6 V3.6 H12.4 V5.6" fill="none" stroke="#333" stroke-width="1.8"/><path d="M4.6 7 V18.4 H15.4 V7" fill="none" stroke="#333" stroke-width="1.9"/></svg>
<div style="left:1377.5px;top:596.5px;width:302.5px;height:1px;background:#bdbdbd"></div>
<div style="left:1377.5px;top:597.5px;width:302.5px;height:25.5px;background:linear-gradient(#fafafa 0,#f4f4f4 1px,#ececec 1.6px,#e6e6e6 9px,#d5d5d5 24.3px,#b9b9b9 24.6px,#b9b9b9 25.5px)"></div>
<svg style="left:1379.4px;top:600.8px;" width="17" height="17" viewBox="0 0 17 17"><circle cx="8.5" cy="8.5" r="8" fill="#3c3c3c"/><path d="M5 5 L12 12 M12 5 L5 12" stroke="#fff" stroke-width="2.5" stroke-linecap="butt"/></svg>
<svg style="left:1400.4px;top:600.8px;" width="17" height="17" viewBox="0 0 17 17"><circle cx="8.5" cy="8.5" r="8" fill="#3c3c3c"/><path d="M7.4 5.6 H12.6 Q13.6 5.6 13.6 6.6 V9.4 Q13.6 10.4 12.6 10.4" fill="none" stroke="#d9d9d9" stroke-width="1"/><rect x="4.6" y="8.3" width="6.6" height="4" rx="1.1" fill="#3c3c3c" stroke="#fff" stroke-width="1.7"/></svg>
<span class="t" style="left:1518.50px;top:603.50px;font-size:12.2px;line-height:15px;height:15px;color:#000;-webkit-text-stroke:0.63px #000;">Brush Size</span>
<div style="left:1377.5px;top:623.5px;width:302.5px;height:247.5px;background:#ececec;overflow:hidden"></div>
<div style="left:1378.2px;top:624.8px;width:45.3px;height:27.2px;background:#fff"></div>
<span class="t" style="left:1391.51px;top:636.10px;font-size:12.9px;line-height:15px;height:15px;color:#222;-webkit-text-stroke:0.42px #222;">0.5</span>
<div style="left:1424.7px;top:624.8px;width:45.3px;height:27.2px;background:#fff"></div>
<span class="t" style="left:1438.06px;top:636.10px;font-size:12.9px;line-height:15px;height:15px;color:#222;-webkit-text-stroke:0.42px #222;">0.7</span>
<div style="left:1471.3px;top:624.8px;width:45.3px;height:27.2px;background:#fff"></div>
<span class="t" style="left:1489.99px;top:636.10px;font-size:12.9px;line-height:15px;height:15px;color:#222;-webkit-text-stroke:0.42px #222;">1</span>
<div style="left:1517.8px;top:624.8px;width:45.3px;height:27.2px;background:#fff"></div>
<span class="t" style="left:1531.16px;top:636.10px;font-size:12.9px;line-height:15px;height:15px;color:#222;-webkit-text-stroke:0.42px #222;">1.5</span>
<div style="left:1564.4px;top:624.8px;width:45.3px;height:27.2px;background:#fff"></div>
<span class="t" style="left:1583.09px;top:636.10px;font-size:12.9px;line-height:15px;height:15px;color:#222;-webkit-text-stroke:0.42px #222;">2</span>
<div style="left:1610.9px;top:624.8px;width:45.3px;height:27.2px;background:#fff"></div>
<span class="t" style="left:1629.64px;top:636.10px;font-size:12.9px;line-height:15px;height:15px;color:#222;-webkit-text-stroke:0.42px #222;">3</span>
<div style="left:1378.2px;top:653.2px;width:45.3px;height:57.6px;background:#fff"></div>
<span class="t" style="left:1396.89px;top:694.50px;font-size:12.9px;line-height:15px;height:15px;color:#222;-webkit-text-stroke:0.42px #222;">4</span>
<div style="left:1424.7px;top:653.2px;width:45.3px;height:57.6px;background:#fff"></div>
<span class="t" style="left:1443.44px;top:694.50px;font-size:12.9px;line-height:15px;height:15px;color:#222;-webkit-text-stroke:0.42px #222;">5</span>
<div style="left:1471.3px;top:653.2px;width:45.3px;height:57.6px;background:#fff"></div>
<span class="t" style="left:1489.99px;top:694.50px;font-size:12.9px;line-height:15px;height:15px;color:#222;-webkit-text-stroke:0.42px #222;">7</span>
<div style="left:1517.8px;top:653.2px;width:45.3px;height:57.6px;background:#fff"></div>
<span class="t" style="left:1532.95px;top:694.50px;font-size:12.9px;line-height:15px;height:15px;color:#222;-webkit-text-stroke:0.42px #222;">10</span>
<div style="left:1564.4px;top:653.2px;width:45.3px;height:57.6px;background:#fff"></div>
<span class="t" style="left:1579.50px;top:694.50px;font-size:12.9px;line-height:15px;height:15px;color:#222;-webkit-text-stroke:0.42px #222;">12</span>
<div style="left:1610.9px;top:653.2px;width:45.3px;height:57.6px;background:#fff"></div>
<span class="t" style="left:1626.05px;top:694.50px;font-size:12.9px;line-height:15px;height:15px;color:#222;-webkit-text-stroke:0.42px #222;">15</span>
<div style="left:1378.2px;top:712.0px;width:45.3px;height:57.2px;background:#fff"></div>
<span class="t" style="left:1393.30px;top:753.30px;font-size:12.9px;line-height:15px;height:15px;color:#222;-webkit-text-stroke:0.42px #222;">20</span>
<div style="left:1424.7px;top:712.0px;width:45.3px;height:57.2px;background:#fff"></div>
<span class="t" style="left:1439.85px;top:753.30px;font-size:12.9px;line-height:15px;height:15px;color:#222;-webkit-text-stroke:0.42px #222;">25</span>
<div style="left:1471.3px;top:712.0px;width:45.3px;height:57.2px;background:#fff"></div>
<span class="t" style="left:1486.40px;top:753.30px;font-size:12.9px;line-height:15px;height:15px;color:#222;-webkit-text-stroke:0.42px #222;">30</span>
<div style="left:1517.8px;top:712.0px;width:45.3px;height:57.2px;background:#fff"></div>
<span class="t" style="left:1532.95px;top:753.30px;font-size:12.9px;line-height:15px;height:15px;color:#222;-webkit-text-stroke:0.42px #222;">40</span>
<div style="left:1564.4px;top:712.0px;width:45.3px;height:57.2px;background:#fff"></div>
<span class="t" style="left:1579.50px;top:753.30px;font-size:12.9px;line-height:15px;height:15px;color:#222;-webkit-text-stroke:0.42px #222;">50</span>
<div style="left:1610.9px;top:712.0px;width:45.3px;height:57.2px;background:#fff"></div>
<span class="t" style="left:1626.05px;top:753.30px;font-size:12.9px;line-height:15px;height:15px;color:#222;-webkit-text-stroke:0.42px #222;">70</span>
<div style="left:1378.2px;top:770.4px;width:45.3px;height:57.2px;background:#fff"></div>
<span class="t" style="left:1389.71px;top:811.70px;font-size:12.9px;line-height:15px;height:15px;color:#222;-webkit-text-stroke:0.42px #222;">100</span>
<div style="left:1424.7px;top:770.4px;width:45.3px;height:57.2px;background:#fff"></div>
<span class="t" style="left:1436.26px;top:811.70px;font-size:12.9px;line-height:15px;height:15px;color:#222;-webkit-text-stroke:0.42px #222;">150</span>
<div style="left:1471.3px;top:770.4px;width:45.3px;height:57.2px;background:#fff"></div>
<span class="t" style="left:1482.81px;top:811.70px;font-size:12.9px;line-height:15px;height:15px;color:#222;-webkit-text-stroke:0.42px #222;">200</span>
<div style="left:1517.8px;top:770.4px;width:45.3px;height:57.2px;background:#fff"></div>
<span class="t" style="left:1529.36px;top:811.70px;font-size:12.9px;line-height:15px;height:15px;color:#222;-webkit-text-stroke:0.42px #222;">300</span>
<div style="left:1564.4px;top:770.4px;width:45.3px;height:57.2px;background:#fff"></div>
<span class="t" style="left:1575.91px;top:811.70px;font-size:12.9px;line-height:15px;height:15px;color:#222;-webkit-text-stroke:0.42px #222;">400</span>
<div style="left:1610.9px;top:770.4px;width:45.3px;height:57.2px;background:#fff"></div>
<span class="t" style="left:1622.46px;top:811.70px;font-size:12.9px;line-height:15px;height:15px;color:#222;-webkit-text-stroke:0.42px #222;">500</span>
<div style="left:1378.2px;top:828.8px;width:45.3px;height:56.6px;background:#fff"></div>
<div style="left:1424.7px;top:828.8px;width:45.3px;height:56.6px;background:#fff"></div>
<div style="left:1471.3px;top:828.8px;width:45.3px;height:56.6px;background:#fff"></div>
<div style="left:1517.8px;top:828.8px;width:45.3px;height:56.6px;background:#fff"></div>
<svg style="left:1377.5px;top:623.5px;" width="302.5" height="247.5" viewBox="1377.5 623.5 302.5 247.5"><circle cx="1400.5" cy="676.1" r="2.10" fill="#222"/><circle cx="1447.0" cy="676.1" r="2.70" fill="#222"/><circle cx="1493.6" cy="676.1" r="3.80" fill="#222"/><circle cx="1540.1" cy="676.1" r="5.80" fill="#222"/><circle cx="1586.7" cy="676.1" r="6.90" fill="#222"/><circle cx="1633.2" cy="676.1" r="8.70" fill="#222"/><circle cx="1400.5" cy="734.9" r="11.90" fill="#222"/><circle cx="1447.0" cy="734.9" r="14.40" fill="#222"/><circle cx="1493.6" cy="734.9" r="16.50" fill="#222"/><circle cx="1540.1" cy="734.9" r="16.50" fill="#222"/><circle cx="1586.7" cy="734.9" r="16.50" fill="#222"/><circle cx="1633.2" cy="734.9" r="16.50" fill="#222"/><circle cx="1400.5" cy="793.3" r="16.50" fill="#222"/><circle cx="1447.0" cy="793.3" r="16.50" fill="#222"/><circle cx="1493.6" cy="793.3" r="16.50" fill="#222"/><circle cx="1540.1" cy="793.3" r="16.50" fill="#222"/><circle cx="1586.7" cy="793.3" r="16.50" fill="#222"/><circle cx="1633.2" cy="793.3" r="16.50" fill="#222"/><circle cx="1400.5" cy="851.7" r="16.50" fill="#222"/><circle cx="1447.0" cy="851.7" r="16.50" fill="#222"/><circle cx="1493.6" cy="851.7" r="16.50" fill="#222"/><circle cx="1540.1" cy="851.7" r="16.50" fill="#222"/></svg>
<div style="left:1656.5px;top:623.5px;width:23.5px;height:247.5px;background:#f5f5f5"></div>
<div style="left:1664px;top:649.5px;width:8.6px;height:202.5px;background:#bdbdbd;border-radius:4.3px"></div>
<div style="left:0px;top:868px;width:1680px;height:1px;background:#fbfbfb"></div>
<div style="left:0px;top:869px;width:1680px;height:24px;background:linear-gradient(#777 0,#777 1px,#f4f4f4 1px,#f0f0f0 2px,#e2e2e2 2.6px,#d2d2d2 50%,#bcbcbc)"></div>
<span class="t" style="left:8.70px;top:872.30px;font-size:14.6px;line-height:18px;height:18px;color:#000;-webkit-text-stroke:0.73px #000;transform:scaleX(1.1200);transform-origin:0 50%;">[command] [shift]</span>
<span class="t" style="left:152.30px;top:872.30px;font-size:14.6px;line-height:18px;height:18px;color:#000;-webkit-text-stroke:0.73px #000;transform:scaleX(1.0723);transform-origin:0 50%;">4441 * 6213 pixel</span>
<span class="t" style="left:288.00px;top:872.30px;font-size:14.6px;line-height:18px;height:18px;color:#000;-webkit-text-stroke:0.73px #000;transform:scaleX(1.0920);transform-origin:0 50%;">(18.8 * 26.3cm)</span>
<span class="t" style="left:411.20px;top:872.30px;font-size:14.6px;line-height:18px;height:18px;color:#000;-webkit-text-stroke:0.73px #000;transform:scaleX(1.1127);transform-origin:0 50%;">600 dpi</span>
<span class="t" style="left:478.70px;top:872.30px;font-size:14.6px;line-height:18px;height:18px;color:#000;-webkit-text-stroke:0.73px #000;transform:scaleX(0.9766);transform-origin:0 50%;">12 %</span>
<span class="t" style="left:525.50px;top:872.30px;font-size:14.6px;line-height:18px;height:18px;color:#000;-webkit-text-stroke:0.73px #000;transform:scaleX(1.0508);transform-origin:0 50%;">( -1140, 1242 )</span>
<span class="t" style="left:638.40px;top:872.30px;font-size:14.6px;line-height:18px;height:18px;color:#000;-webkit-text-stroke:0.73px #000;transform:scaleX(1.0940);transform-origin:0 50%;">Draw a straight line by holding down shift, Change a brush size by holding down command+option and dragging, A+click to activate layer</span>
<div style="left:0px;top:882px;width:11px;height:11px;background:radial-gradient(circle at 100% 0,rgba(0,0,0,0) 10.2px,#111 11.2px)"></div>
<div style="left:1672px;top:885px;width:8px;height:8px;background:radial-gradient(circle at 0 0,rgba(0,0,0,0) 7.2px,#111 8.2px)"></div>
</div></body></html>
